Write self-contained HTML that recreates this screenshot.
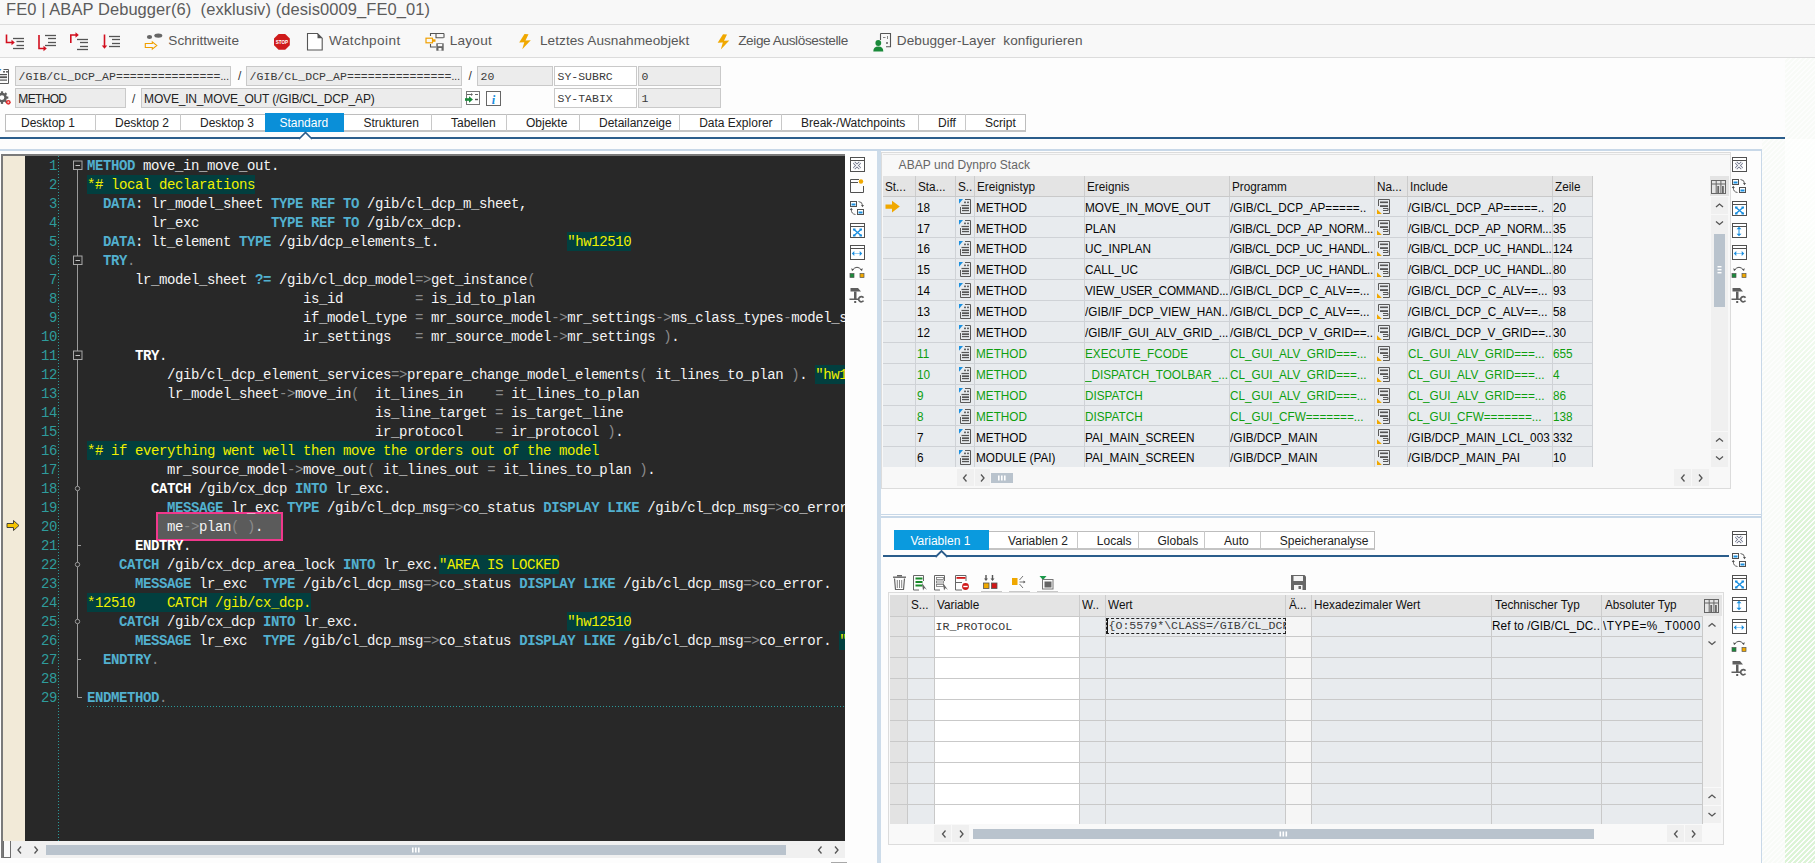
<!DOCTYPE html>
<html><head><meta charset="utf-8"><title>ABAP Debugger</title>
<style>
html,body{margin:0;padding:0;}
body{width:1815px;height:863px;position:relative;overflow:hidden;background:#fdfdfd;font-family:"Liberation Sans", sans-serif;}
.t{position:absolute;white-space:pre;}
.r{position:absolute;}
svg.r{overflow:visible;}
</style></head><body>
<svg class="r" style="left:1762px;top:58px" width="53" height="805" shape-rendering="crispEdges"><defs><pattern id="pf" x="0" y="0" width="5" height="5" patternUnits="userSpaceOnUse"><rect x="0" y="0" width="1" height="1" fill="#f8fbf7"/><rect x="1" y="0" width="1" height="1" fill="#f8fbf7"/><rect x="2" y="0" width="1" height="1" fill="#f8fbf7"/><rect x="0" y="1" width="1" height="1" fill="#f8fbf7"/><rect x="1" y="1" width="1" height="1" fill="#f8fbf7"/><rect x="4" y="1" width="1" height="1" fill="#f8fbf7"/><rect x="0" y="2" width="1" height="1" fill="#f8fbf7"/><rect x="3" y="2" width="1" height="1" fill="#f8fbf7"/><rect x="4" y="2" width="1" height="1" fill="#f8fbf7"/><rect x="2" y="3" width="1" height="1" fill="#f8fbf7"/><rect x="3" y="3" width="1" height="1" fill="#f8fbf7"/><rect x="4" y="3" width="1" height="1" fill="#f8fbf7"/><rect x="1" y="4" width="1" height="1" fill="#f8fbf7"/><rect x="2" y="4" width="1" height="1" fill="#f8fbf7"/><rect x="3" y="4" width="1" height="1" fill="#f8fbf7"/></pattern><pattern id="pg" x="0" y="0" width="5" height="5" patternUnits="userSpaceOnUse"><rect x="0" y="0" width="1" height="1" fill="#dcf4d6"/><rect x="1" y="0" width="1" height="1" fill="#dcf4d6"/><rect x="2" y="0" width="1" height="1" fill="#dcf4d6"/><rect x="0" y="1" width="1" height="1" fill="#dcf4d6"/><rect x="1" y="1" width="1" height="1" fill="#dcf4d6"/><rect x="4" y="1" width="1" height="1" fill="#dcf4d6"/><rect x="0" y="2" width="1" height="1" fill="#dcf4d6"/><rect x="3" y="2" width="1" height="1" fill="#dcf4d6"/><rect x="4" y="2" width="1" height="1" fill="#dcf4d6"/><rect x="2" y="3" width="1" height="1" fill="#dcf4d6"/><rect x="3" y="3" width="1" height="1" fill="#dcf4d6"/><rect x="4" y="3" width="1" height="1" fill="#dcf4d6"/><rect x="1" y="4" width="1" height="1" fill="#dcf4d6"/><rect x="2" y="4" width="1" height="1" fill="#dcf4d6"/><rect x="3" y="4" width="1" height="1" fill="#dcf4d6"/></pattern><linearGradient id="gm" x1="0" y1="0" x2="0" y2="1"><stop offset="0" stop-color="#fff" stop-opacity="0.93"/><stop offset="0.12" stop-color="#fff" stop-opacity="0.9"/><stop offset="0.55" stop-color="#fff" stop-opacity="0"/><stop offset="1" stop-color="#fff" stop-opacity="0"/></linearGradient></defs><rect x="23" y="0" width="30" height="81" fill="url(#pf)"/><rect x="0" y="81" width="23" height="724" fill="url(#pf)"/><rect x="23" y="81" width="30" height="724" fill="url(#pg)"/><rect x="23" y="81" width="30" height="724" fill="url(#gm)"/></svg>
<div class="r" style="left:0px;top:0px;width:1815px;height:24px;background:#f8f8f8;"></div>
<div class="r" style="left:0px;top:24px;width:1815px;height:1px;background:#dcdcdc;"></div>
<div class="t" style="left:6.00px;top:-0.72px;font-size:16.50px;line-height:20px;color:#5c5c5c;font-family:'Liberation Sans', sans-serif;letter-spacing:0.071px;">FE0 | ABAP Debugger(6)  (exklusiv) (desis0009_FE0_01)</div>
<div class="r" style="left:0px;top:25px;width:1815px;height:32px;background:#f8f8f8;"></div>
<div class="r" style="left:0px;top:57px;width:1815px;height:1px;background:#dcdcdc;"></div>
<svg class="r" style="left:0px;top:25px" width="1000" height="32" viewBox="0 25 1000 32"><path d="M6.5 34.5 V42.5 H12" fill="none" stroke="#d20f1e" stroke-width="1.6"/><path d="M11.5 39.8 L14.8 42.5 L11.5 45.2Z" fill="#d20f1e"/><line x1="13" y1="38.5" x2="24" y2="38.5" stroke="#555555" stroke-width="1.3"/><line x1="16.5" y1="41.5" x2="24" y2="41.5" stroke="#555555" stroke-width="1.3"/><line x1="16.5" y1="45.5" x2="24" y2="45.5" stroke="#555555" stroke-width="1.3"/><line x1="13" y1="48.5" x2="24" y2="48.5" stroke="#555555" stroke-width="1.3"/><path d="M39 35 V48.5 H44" fill="none" stroke="#d20f1e" stroke-width="1.6"/><path d="M43.5 45.8 L46.8 48.5 L43.5 51.2Z" fill="#d20f1e"/><line x1="45" y1="35.5" x2="56" y2="35.5" stroke="#555555" stroke-width="1.3"/><line x1="48" y1="38.5" x2="56" y2="38.5" stroke="#555555" stroke-width="1.3"/><line x1="48" y1="42.5" x2="56" y2="42.5" stroke="#555555" stroke-width="1.3"/><line x1="45" y1="45.5" x2="56" y2="45.5" stroke="#555555" stroke-width="1.3"/><path d="M70.8 43 V35 H76" fill="none" stroke="#d20f1e" stroke-width="1.6"/><path d="M75.5 32.3 L78.8 35 L75.5 37.7Z" fill="#d20f1e"/><line x1="77" y1="39.5" x2="88" y2="39.5" stroke="#555555" stroke-width="1.3"/><line x1="80" y1="42.5" x2="88" y2="42.5" stroke="#555555" stroke-width="1.3"/><line x1="80" y1="46.5" x2="88" y2="46.5" stroke="#555555" stroke-width="1.3"/><line x1="77" y1="49.5" x2="88" y2="49.5" stroke="#555555" stroke-width="1.3"/><path d="M104.5 34.5 V46" fill="none" stroke="#d20f1e" stroke-width="1.6"/><path d="M101.8 45.5 L104.5 48.8 L107.2 45.5Z" fill="#d20f1e"/><line x1="109" y1="36.5" x2="120" y2="36.5" stroke="#555555" stroke-width="1.3"/><line x1="112" y1="39.5" x2="120" y2="39.5" stroke="#555555" stroke-width="1.3"/><line x1="112" y1="43.5" x2="120" y2="43.5" stroke="#555555" stroke-width="1.3"/><line x1="109" y1="46.5" x2="120" y2="46.5" stroke="#555555" stroke-width="1.3"/><ellipse cx="149.5" cy="37" rx="2.6" ry="1.9" fill="#666"/><ellipse cx="158.3" cy="35.6" rx="4" ry="2.2" fill="#666"/><path d="M145.3 43.5 H152.3 V41.8 L156.8 45.5 L152.3 49.2 V47.5 H145.3Z" fill="none" stroke="#f0a000" stroke-width="1.1"/><polygon points="278.6,34 285.2,34 289.8,38.6 289.8,45.2 285.2,49.8 278.6,49.8 274,45.2 274,38.6" fill="#cf1b1b"/><text x="281.9" y="44" font-size="4.6" font-weight="bold" fill="#fff" text-anchor="middle" font-family="Liberation Sans">STOP</text><path d="M307.5 33.5 H317.5 L322.2 38.2 V50 H307.5Z" fill="#fff" stroke="#555" stroke-width="1.1"/><path d="M317.5 33.5 V38.2 H322.2Z" fill="#555"/><rect x="426" y="38.2" width="6.5" height="4.6" fill="none" stroke="#f0a000" stroke-width="1.2"/><rect x="432.5" y="39.3" width="3" height="2.5" fill="#f0a000"/><path d="M430.5 36 V33.5 H444 M436 33.5 V37.8 H443.5 M444 33.5 V37.8" fill="none" stroke="#555" stroke-width="1.1"/><path d="M430.5 44 V47 H436" fill="none" stroke="#555" stroke-width="1.1"/><rect x="436.3" y="43.3" width="7.4" height="7.4" fill="#666"/><rect x="437.8" y="44" width="4.4" height="2.2" fill="#f7f7f7"/><rect x="438.5" y="48" width="3" height="2.7" fill="#f7f7f7"/><path d="M524.5 34 L519.2 42.6 L524.3 42.2 L522.3 49.3 L530.8 40.2 L525.5 40.6 L528.5 34.2 Z" fill="#f0a800"/><path d="M723.0 34.2 L717.7 42.800000000000004 L722.8 42.400000000000006 L720.8 49.5 L729.3 40.400000000000006 L724.0 40.800000000000004 L727.0 34.400000000000006 Z" fill="#f0a800"/><path d="M880.5 33.5 H890.5 V46.8 H886" fill="none" stroke="#555" stroke-width="1.1"/><path d="M880.5 33.5 V40" fill="none" stroke="#555" stroke-width="1.1"/><path d="M883 37.5 H885.5 M887.5 36 V39 M887 42 L888 43 L887 44 L886 43Z" stroke="#666" stroke-width="0.8" fill="none"/><circle cx="878.3" cy="43" r="2.9" fill="#1a8a3a"/><path d="M873.3 51.5 Q873.3 46.5 878.3 46.5 Q883.3 46.5 883.3 51.5Z" fill="#1a8a3a"/></svg>
<div class="t" style="left:168.30px;top:32.89px;font-size:13.60px;line-height:16px;color:#575757;font-family:'Liberation Sans', sans-serif;letter-spacing:0.036px;">Schrittweite</div>
<div class="t" style="left:329.00px;top:32.89px;font-size:13.60px;line-height:16px;color:#575757;font-family:'Liberation Sans', sans-serif;letter-spacing:0.418px;">Watchpoint</div>
<div class="t" style="left:449.70px;top:32.89px;font-size:13.60px;line-height:16px;color:#575757;font-family:'Liberation Sans', sans-serif;letter-spacing:0.245px;">Layout</div>
<div class="t" style="left:540.00px;top:32.89px;font-size:13.60px;line-height:16px;color:#575757;font-family:'Liberation Sans', sans-serif;letter-spacing:0.052px;">Letztes Ausnahmeobjekt</div>
<div class="t" style="left:738.20px;top:32.89px;font-size:13.60px;line-height:16px;color:#575757;font-family:'Liberation Sans', sans-serif;letter-spacing:-0.391px;">Zeige Auslösestelle</div>
<div class="t" style="left:896.80px;top:32.89px;font-size:13.60px;line-height:16px;color:#575757;font-family:'Liberation Sans', sans-serif;letter-spacing:0.047px;">Debugger-Layer  konfigurieren</div>
<div class="r" style="left:15px;top:66px;width:216px;height:20px;background:#ececec;border:1px solid #c9c9c9;box-sizing:border-box;"></div>
<div class="r" style="left:246px;top:66px;width:216px;height:20px;background:#ececec;border:1px solid #c9c9c9;box-sizing:border-box;"></div>
<div class="r" style="left:477px;top:66px;width:76px;height:20px;background:#ececec;border:1px solid #c9c9c9;box-sizing:border-box;"></div>
<div class="r" style="left:554px;top:66px;width:83px;height:20px;background:#ffffff;border:1px solid #c9c9c9;box-sizing:border-box;"></div>
<div class="r" style="left:638px;top:66px;width:83px;height:20px;background:#ececec;border:1px solid #c9c9c9;box-sizing:border-box;"></div>
<div class="t" style="left:18.50px;top:69.94px;font-size:11.50px;line-height:14px;color:#3a3a3a;font-family:'Liberation Mono', monospace;letter-spacing:0.059px;">/GIB/CL_DCP_AP===============</div>
<div class="t" style="left:220.50px;top:70.53px;font-size:10.00px;line-height:12px;color:#222;font-family:'Liberation Sans', sans-serif;letter-spacing:0.052px;">...</div>
<div class="t" style="left:238.00px;top:69.34px;font-size:12.00px;line-height:14px;color:#333;font-family:'Liberation Sans', sans-serif;">/</div>
<div class="t" style="left:249.50px;top:69.94px;font-size:11.50px;line-height:14px;color:#3a3a3a;font-family:'Liberation Mono', monospace;letter-spacing:0.059px;">/GIB/CL_DCP_AP===============</div>
<div class="t" style="left:451.50px;top:70.53px;font-size:10.00px;line-height:12px;color:#222;font-family:'Liberation Sans', sans-serif;letter-spacing:0.052px;">...</div>
<div class="t" style="left:468.50px;top:69.34px;font-size:12.00px;line-height:14px;color:#333;font-family:'Liberation Sans', sans-serif;">/</div>
<div class="t" style="left:480.50px;top:69.94px;font-size:11.50px;line-height:14px;color:#3a3a3a;font-family:'Liberation Mono', monospace;">20</div>
<div class="t" style="left:557.50px;top:69.94px;font-size:11.50px;line-height:14px;color:#3a3a3a;font-family:'Liberation Mono', monospace;">SY-SUBRC</div>
<div class="t" style="left:641.50px;top:69.94px;font-size:11.50px;line-height:14px;color:#3a3a3a;font-family:'Liberation Mono', monospace;">0</div>
<div class="r" style="left:15px;top:88px;width:111px;height:20px;background:#ececec;border:1px solid #c9c9c9;box-sizing:border-box;"></div>
<div class="r" style="left:141px;top:88px;width:321px;height:20px;background:#ececec;border:1px solid #c9c9c9;box-sizing:border-box;"></div>
<div class="r" style="left:554px;top:88px;width:83px;height:20px;background:#ffffff;border:1px solid #c9c9c9;box-sizing:border-box;"></div>
<div class="r" style="left:638px;top:88px;width:83px;height:20px;background:#ececec;border:1px solid #c9c9c9;box-sizing:border-box;"></div>
<div class="t" style="left:18.30px;top:91.54px;font-size:12.00px;line-height:14px;color:#222;font-family:'Liberation Sans', sans-serif;letter-spacing:-0.667px;">METHOD</div>
<div class="t" style="left:132.00px;top:91.54px;font-size:12.00px;line-height:14px;color:#333;font-family:'Liberation Sans', sans-serif;">/</div>
<div class="t" style="left:144.10px;top:91.54px;font-size:12.00px;line-height:14px;color:#222;font-family:'Liberation Sans', sans-serif;letter-spacing:-0.183px;">MOVE_IN_MOVE_OUT (/GIB/CL_DCP_AP)</div>
<div class="t" style="left:557.50px;top:91.94px;font-size:11.50px;line-height:14px;color:#3a3a3a;font-family:'Liberation Mono', monospace;">SY-TABIX</div>
<div class="t" style="left:641.50px;top:91.94px;font-size:11.50px;line-height:14px;color:#3a3a3a;font-family:'Liberation Mono', monospace;">1</div>
<svg class="r" style="left:0px;top:60px" width="520" height="52" viewBox="0 60 520 52"><path d="M3.5 69.5 H8.5 V83.5 H-1" fill="none" stroke="#5a5a5a" stroke-width="1"/><rect x="3" y="71" width="2" height="1.6" fill="#666"/><rect x="6" y="71" width="2" height="1.6" fill="#666"/><rect x="0" y="74" width="7" height="1.2" fill="#555"/><rect x="0" y="76.3" width="7" height="1.8" fill="#555"/><rect x="0" y="79.5" width="7" height="1.2" fill="#555"/><path d="M0 69 H1.5 L0 71Z" fill="#1a90e0"/><circle cx="2" cy="97.6" r="3.6" fill="none" stroke="#5e5e5e" stroke-width="2.6"/><rect x="6.10" y="96.50" width="2.2" height="2.2" fill="#5e5e5e" transform="rotate(0 7.20 97.60)"/><rect x="4.58" y="100.18" width="2.2" height="2.2" fill="#5e5e5e" transform="rotate(45 5.68 101.28)"/><rect x="0.90" y="101.70" width="2.2" height="2.2" fill="#5e5e5e" transform="rotate(90 2.00 102.80)"/><rect x="-2.78" y="100.18" width="2.2" height="2.2" fill="#5e5e5e" transform="rotate(135 -1.68 101.28)"/><rect x="-4.30" y="96.50" width="2.2" height="2.2" fill="#5e5e5e" transform="rotate(180 -3.20 97.60)"/><rect x="-2.78" y="92.82" width="2.2" height="2.2" fill="#5e5e5e" transform="rotate(225 -1.68 93.92)"/><rect x="0.90" y="91.30" width="2.2" height="2.2" fill="#5e5e5e" transform="rotate(270 2.00 92.40)"/><rect x="4.58" y="92.82" width="2.2" height="2.2" fill="#5e5e5e" transform="rotate(315 5.68 93.92)"/><circle cx="8.3" cy="102.3" r="2.4" fill="#e02828"/><circle cx="8.3" cy="102.3" r="1" fill="#f8c0c0"/><rect x="466.5" y="91.5" width="13" height="13" fill="#fff" stroke="#777" stroke-width="1"/><path d="M467 94.5 H472 M475 94.5 H478" stroke="#666" stroke-width="1"/><path d="M471 93 L473 94.5 L471 96Z" fill="#666"/><path d="M465 99.5 H469.5" stroke="#1a8a3a" stroke-width="2.6"/><path d="M469 96.3 L473 99.5 L469 102.7Z" fill="#1a8a3a"/><path d="M475 99.5 H478" stroke="#555" stroke-width="1.4"/><rect x="486.5" y="91.5" width="14" height="14" fill="#fff" stroke="#666" stroke-width="1"/><text x="493.5" y="103.5" font-size="12.5" font-style="italic" font-weight="bold" fill="#1a90e0" text-anchor="middle" font-family="Liberation Serif">i</text></svg>
<div class="r" style="left:5px;top:114px;width:1021px;height:18px;background:#fff;border:1px solid #bdbdbd;border-bottom:2px solid #c4c4c4;box-sizing:border-box;"></div>
<div class="r" style="left:95px;top:114px;width:1px;height:17px;background:#c8c8c8;"></div>
<div class="t" style="left:21.00px;top:115.84px;font-size:12.00px;line-height:14px;color:#222222;font-family:'Liberation Sans', sans-serif;">Desktop 1</div>
<div class="r" style="left:180px;top:114px;width:1px;height:17px;background:#c8c8c8;"></div>
<div class="t" style="left:115.00px;top:115.84px;font-size:12.00px;line-height:14px;color:#222222;font-family:'Liberation Sans', sans-serif;">Desktop 2</div>
<div class="r" style="left:265px;top:114px;width:1px;height:17px;background:#c8c8c8;"></div>
<div class="t" style="left:200.00px;top:115.84px;font-size:12.00px;line-height:14px;color:#222222;font-family:'Liberation Sans', sans-serif;">Desktop 3</div>
<div class="r" style="left:265px;top:113px;width:79px;height:19px;background:#0a8fd8;"></div>
<div class="t" style="left:279.40px;top:115.84px;font-size:12.00px;line-height:14px;color:#ffffff;font-family:'Liberation Sans', sans-serif;">Standard</div>
<div class="r" style="left:431px;top:114px;width:1px;height:17px;background:#c8c8c8;"></div>
<div class="t" style="left:363.50px;top:115.84px;font-size:12.00px;line-height:14px;color:#222222;font-family:'Liberation Sans', sans-serif;">Strukturen</div>
<div class="r" style="left:506px;top:114px;width:1px;height:17px;background:#c8c8c8;"></div>
<div class="t" style="left:451.00px;top:115.84px;font-size:12.00px;line-height:14px;color:#222222;font-family:'Liberation Sans', sans-serif;">Tabellen</div>
<div class="r" style="left:579px;top:114px;width:1px;height:17px;background:#c8c8c8;"></div>
<div class="t" style="left:526.00px;top:115.84px;font-size:12.00px;line-height:14px;color:#222222;font-family:'Liberation Sans', sans-serif;">Objekte</div>
<div class="r" style="left:679px;top:114px;width:1px;height:17px;background:#c8c8c8;"></div>
<div class="t" style="left:599.00px;top:115.84px;font-size:12.00px;line-height:14px;color:#222222;font-family:'Liberation Sans', sans-serif;">Detailanzeige</div>
<div class="r" style="left:781px;top:114px;width:1px;height:17px;background:#c8c8c8;"></div>
<div class="t" style="left:699.20px;top:115.84px;font-size:12.00px;line-height:14px;color:#222222;font-family:'Liberation Sans', sans-serif;">Data Explorer</div>
<div class="r" style="left:918px;top:114px;width:1px;height:17px;background:#c8c8c8;"></div>
<div class="t" style="left:801.00px;top:115.84px;font-size:12.00px;line-height:14px;color:#222222;font-family:'Liberation Sans', sans-serif;">Break-/Watchpoints</div>
<div class="r" style="left:965px;top:114px;width:1px;height:17px;background:#c8c8c8;"></div>
<div class="t" style="left:938.10px;top:115.84px;font-size:12.00px;line-height:14px;color:#222222;font-family:'Liberation Sans', sans-serif;">Diff</div>
<div class="t" style="left:985.10px;top:115.84px;font-size:12.00px;line-height:14px;color:#222222;font-family:'Liberation Sans', sans-serif;">Script</div>
<div class="r" style="left:0px;top:137px;width:1785px;height:2px;background:#2b5d8b;"></div>
<svg class="r" style="left:295px;top:128px" width="20" height="12" viewBox="295 128 20 12"><path d="M299 139 L305.5 132.5 L312 139" fill="#fff" stroke="#2b5d8b" stroke-width="1.6"/></svg>
<div class="r" style="left:0px;top:149px;width:1762px;height:2px;background:#c8d8e8;"></div>
<div class="r" style="left:1px;top:154px;width:844px;height:704px;background:#7a7a7a;"></div>
<div class="r" style="left:3px;top:156px;width:22px;height:685px;background:#f2ead8;"></div>
<div class="r" style="left:25px;top:156px;width:820px;height:685px;background:#282828;"></div>
<div class="r" style="left:3px;top:841px;width:842px;height:17px;background:#f0f0f0;"></div>
<div class="r" style="left:831px;top:862px;width:16px;height:1px;background:#a8a8a8;"></div>
<div class="r" style="left:2.5px;top:841px;width:8px;height:17px;background:#fafafa;border:1.5px solid #6e6e6e;border-top:none;box-sizing:border-box;"></div>
<div class="r" style="left:46px;top:845px;width:740px;height:10px;background:#b9c3cd;"></div>
<svg class="r" style="left:0px;top:840px" width="845" height="20" viewBox="0 840 845 20"><path d="M21 846.5 L18 850 L21 853.5" fill="none" stroke="#555" stroke-width="1.3"/><path d="M34.5 846.5 L37.5 850 L34.5 853.5" fill="none" stroke="#555" stroke-width="1.3"/><path d="M821.5 846.5 L818.5 850 L821.5 853.5" fill="none" stroke="#555" stroke-width="1.3"/><path d="M835 846.5 L838 850 L835 853.5" fill="none" stroke="#555" stroke-width="1.3"/><rect x="412" y="847.5" width="1.6" height="5" fill="#fff"/><rect x="415" y="847.5" width="1.6" height="5" fill="#fff"/><rect x="418" y="847.5" width="1.6" height="5" fill="#fff"/></svg>
<div class="r" style="left:58px;top:156px;width:1px;height:685px;background:repeating-linear-gradient(180deg,#2a9a9a 0px,#2a9a9a 1px,transparent 1px,transparent 3px);"></div>
<div class="r" style="left:156px;top:512px;width:127px;height:29px;background:#5b5b5b;border:2px solid #f0388c;box-sizing:border-box;"></div>
<div class="r" style="left:87px;top:175px;width:168px;height:19px;background:#023f3f;"></div>
<div class="r" style="left:567px;top:232px;width:64px;height:19px;background:#023f3f;"></div>
<div class="r" style="left:815px;top:365px;width:30px;height:19px;background:#023f3f;"></div>
<div class="r" style="left:87px;top:441px;width:512px;height:19px;background:#023f3f;"></div>
<div class="r" style="left:439px;top:555px;width:120px;height:19px;background:#023f3f;"></div>
<div class="r" style="left:87px;top:593px;width:224px;height:19px;background:#023f3f;"></div>
<div class="r" style="left:567px;top:612px;width:64px;height:19px;background:#023f3f;"></div>
<div class="r" style="left:839px;top:631px;width:6px;height:19px;background:#023f3f;"></div>
<div class="r" style="left:87px;top:156px;width:758px;height:685px;overflow:hidden;font-family:'Liberation Mono',monospace;font-size:14.00px;letter-spacing:-0.400px;"><div style="position:absolute;left:0;top:1px;height:19px;line-height:19px;white-space:pre;"><b style="color:#52b0cf">METHOD</b><span style="color:#f4f4f4"> move_in_move_out.</span></div><div style="position:absolute;left:0;top:20px;height:19px;line-height:19px;white-space:pre;"><span style="color:#f0f000">*# local declarations</span></div><div style="position:absolute;left:0;top:39px;height:19px;line-height:19px;white-space:pre;">  <b style="color:#52b0cf">DATA</b><span style="color:#f4f4f4">: lr_model_sheet </span><b style="color:#52b0cf">TYPE REF TO</b><span style="color:#f4f4f4"> /gib/cl_dcp_m_sheet,</span></div><div style="position:absolute;left:0;top:58px;height:19px;line-height:19px;white-space:pre;">        <span style="color:#f4f4f4">lr_exc</span>         <b style="color:#52b0cf">TYPE REF TO</b><span style="color:#f4f4f4"> /gib/cx_dcp.</span></div><div style="position:absolute;left:0;top:77px;height:19px;line-height:19px;white-space:pre;">  <b style="color:#52b0cf">DATA</b><span style="color:#f4f4f4">: lt_element </span><b style="color:#52b0cf">TYPE</b><span style="color:#f4f4f4"> /gib/dcp_elements_t.</span>                <span style="color:#f0f000">"hw12510</span></div><div style="position:absolute;left:0;top:96px;height:19px;line-height:19px;white-space:pre;">  <b style="color:#52b0cf">TRY</b><span style="color:#8a8a8a">.</span></div><div style="position:absolute;left:0;top:115px;height:19px;line-height:19px;white-space:pre;">      <span style="color:#f4f4f4">lr_model_sheet </span><b style="color:#52b0cf">?=</b><span style="color:#f4f4f4"> /gib/cl_dcp_model</span><span style="color:#8a8a8a">=&gt;</span><span style="color:#f4f4f4">get_instance</span><span style="color:#8a8a8a">(</span></div><div style="position:absolute;left:0;top:134px;height:19px;line-height:19px;white-space:pre;">                           <span style="color:#f4f4f4">is_id</span>         <span style="color:#8a8a8a">=</span><span style="color:#f4f4f4"> is_id_to_plan</span></div><div style="position:absolute;left:0;top:153px;height:19px;line-height:19px;white-space:pre;">                           <span style="color:#f4f4f4">if_model_type </span><span style="color:#8a8a8a">=</span><span style="color:#f4f4f4"> mr_source_model</span><span style="color:#8a8a8a">-&gt;</span><span style="color:#f4f4f4">mr_settings</span><span style="color:#8a8a8a">-&gt;</span><span style="color:#f4f4f4">ms_class_types</span><span style="color:#8a8a8a">-</span><span style="color:#f4f4f4">model_s</span></div><div style="position:absolute;left:0;top:172px;height:19px;line-height:19px;white-space:pre;">                           <span style="color:#f4f4f4">ir_settings</span>   <span style="color:#8a8a8a">=</span><span style="color:#f4f4f4"> mr_source_model</span><span style="color:#8a8a8a">-&gt;</span><span style="color:#f4f4f4">mr_settings </span><span style="color:#8a8a8a">)</span><span style="color:#f4f4f4">.</span></div><div style="position:absolute;left:0;top:191px;height:19px;line-height:19px;white-space:pre;">      <b style="color:#ffffff">TRY</b><span style="color:#f4f4f4">.</span></div><div style="position:absolute;left:0;top:210px;height:19px;line-height:19px;white-space:pre;">          <span style="color:#f4f4f4">/gib/cl_dcp_element_services</span><span style="color:#8a8a8a">=&gt;</span><span style="color:#f4f4f4">prepare_change_model_elements</span><span style="color:#8a8a8a">(</span><span style="color:#f4f4f4"> it_lines_to_plan </span><span style="color:#8a8a8a">)</span><span style="color:#f4f4f4">.</span> <span style="color:#f0f000">"hw1</span></div><div style="position:absolute;left:0;top:229px;height:19px;line-height:19px;white-space:pre;">          <span style="color:#f4f4f4">lr_model_sheet</span><span style="color:#8a8a8a">-&gt;</span><span style="color:#f4f4f4">move_in</span><span style="color:#8a8a8a">(</span>  <span style="color:#f4f4f4">it_lines_in</span>    <span style="color:#8a8a8a">=</span><span style="color:#f4f4f4"> it_lines_to_plan</span></div><div style="position:absolute;left:0;top:248px;height:19px;line-height:19px;white-space:pre;">                                    <span style="color:#f4f4f4">is_line_target </span><span style="color:#8a8a8a">=</span><span style="color:#f4f4f4"> is_target_line</span></div><div style="position:absolute;left:0;top:267px;height:19px;line-height:19px;white-space:pre;">                                    <span style="color:#f4f4f4">ir_protocol</span>    <span style="color:#8a8a8a">=</span><span style="color:#f4f4f4"> ir_protocol </span><span style="color:#8a8a8a">)</span><span style="color:#f4f4f4">.</span></div><div style="position:absolute;left:0;top:286px;height:19px;line-height:19px;white-space:pre;"><span style="color:#f0f000">*# if everything went well then move the orders out of the model</span></div><div style="position:absolute;left:0;top:305px;height:19px;line-height:19px;white-space:pre;">          <span style="color:#f4f4f4">mr_source_model</span><span style="color:#8a8a8a">-&gt;</span><span style="color:#f4f4f4">move_out</span><span style="color:#8a8a8a">(</span><span style="color:#f4f4f4"> it_lines_out </span><span style="color:#8a8a8a">=</span><span style="color:#f4f4f4"> it_lines_to_plan </span><span style="color:#8a8a8a">)</span><span style="color:#f4f4f4">.</span></div><div style="position:absolute;left:0;top:324px;height:19px;line-height:19px;white-space:pre;">        <b style="color:#ffffff">CATCH</b><span style="color:#f4f4f4"> /gib/cx_dcp </span><b style="color:#52b0cf">INTO</b><span style="color:#f4f4f4"> lr_exc.</span></div><div style="position:absolute;left:0;top:343px;height:19px;line-height:19px;white-space:pre;">          <b style="color:#52b0cf">MESSAGE</b><span style="color:#f4f4f4"> lr_exc </span><b style="color:#52b0cf">TYPE</b><span style="color:#f4f4f4"> /gib/cl_dcp_msg</span><span style="color:#8a8a8a">=&gt;</span><span style="color:#f4f4f4">co_status </span><b style="color:#52b0cf">DISPLAY LIKE</b><span style="color:#f4f4f4"> /gib/cl_dcp_msg</span><span style="color:#8a8a8a">=&gt;</span><span style="color:#f4f4f4">co_error</span></div><div style="position:absolute;left:0;top:362px;height:19px;line-height:19px;white-space:pre;">          <span style="color:#f4f4f4">me</span><span style="color:#8a8a8a">-&gt;</span><span style="color:#f4f4f4">plan</span><span style="color:#8a8a8a">( )</span><span style="color:#f4f4f4">.</span></div><div style="position:absolute;left:0;top:381px;height:19px;line-height:19px;white-space:pre;">      <b style="color:#ffffff">ENDTRY</b><span style="color:#f4f4f4">.</span></div><div style="position:absolute;left:0;top:400px;height:19px;line-height:19px;white-space:pre;">    <b style="color:#52b0cf">CATCH</b><span style="color:#f4f4f4"> /gib/cx_dcp_area_lock </span><b style="color:#52b0cf">INTO</b><span style="color:#f4f4f4"> lr_exc.</span><span style="color:#f0f000">"AREA IS LOCKED</span></div><div style="position:absolute;left:0;top:419px;height:19px;line-height:19px;white-space:pre;">      <b style="color:#52b0cf">MESSAGE</b><span style="color:#f4f4f4"> lr_exc  </span><b style="color:#52b0cf">TYPE</b><span style="color:#f4f4f4"> /gib/cl_dcp_msg</span><span style="color:#8a8a8a">=&gt;</span><span style="color:#f4f4f4">co_status </span><b style="color:#52b0cf">DISPLAY LIKE</b><span style="color:#f4f4f4"> /gib/cl_dcp_msg</span><span style="color:#8a8a8a">=&gt;</span><span style="color:#f4f4f4">co_error.</span></div><div style="position:absolute;left:0;top:438px;height:19px;line-height:19px;white-space:pre;"><span style="color:#f0f000">*12510    CATCH /gib/cx_dcp.</span></div><div style="position:absolute;left:0;top:457px;height:19px;line-height:19px;white-space:pre;">    <b style="color:#52b0cf">CATCH</b><span style="color:#f4f4f4"> /gib/cx_dcp </span><b style="color:#52b0cf">INTO</b><span style="color:#f4f4f4"> lr_exc.</span>                          <span style="color:#f0f000">"hw12510</span></div><div style="position:absolute;left:0;top:476px;height:19px;line-height:19px;white-space:pre;">      <b style="color:#52b0cf">MESSAGE</b><span style="color:#f4f4f4"> lr_exc  </span><b style="color:#52b0cf">TYPE</b><span style="color:#f4f4f4"> /gib/cl_dcp_msg</span><span style="color:#8a8a8a">=&gt;</span><span style="color:#f4f4f4">co_status </span><b style="color:#52b0cf">DISPLAY LIKE</b><span style="color:#f4f4f4"> /gib/cl_dcp_msg</span><span style="color:#8a8a8a">=&gt;</span><span style="color:#f4f4f4">co_error. </span><span style="color:#f0f000">"</span></div><div style="position:absolute;left:0;top:495px;height:19px;line-height:19px;white-space:pre;">  <b style="color:#52b0cf">ENDTRY</b><span style="color:#8a8a8a">.</span></div><div style="position:absolute;left:0;top:514px;height:19px;line-height:19px;white-space:pre;"></div><div style="position:absolute;left:0;top:533px;height:19px;line-height:19px;white-space:pre;"><b style="color:#52b0cf">ENDMETHOD</b><span style="color:#8a8a8a">.</span></div></div>
<div class="t" style="left:49.00px;top:157.97px;font-size:14.00px;line-height:17px;color:#2e9c9c;font-family:'Liberation Mono', monospace;letter-spacing:-0.400px;">1</div>
<div class="t" style="left:49.00px;top:176.97px;font-size:14.00px;line-height:17px;color:#2e9c9c;font-family:'Liberation Mono', monospace;letter-spacing:-0.400px;">2</div>
<div class="t" style="left:49.00px;top:195.97px;font-size:14.00px;line-height:17px;color:#2e9c9c;font-family:'Liberation Mono', monospace;letter-spacing:-0.400px;">3</div>
<div class="t" style="left:49.00px;top:214.97px;font-size:14.00px;line-height:17px;color:#2e9c9c;font-family:'Liberation Mono', monospace;letter-spacing:-0.400px;">4</div>
<div class="t" style="left:49.00px;top:233.97px;font-size:14.00px;line-height:17px;color:#2e9c9c;font-family:'Liberation Mono', monospace;letter-spacing:-0.400px;">5</div>
<div class="t" style="left:49.00px;top:252.97px;font-size:14.00px;line-height:17px;color:#2e9c9c;font-family:'Liberation Mono', monospace;letter-spacing:-0.400px;">6</div>
<div class="t" style="left:49.00px;top:271.97px;font-size:14.00px;line-height:17px;color:#2e9c9c;font-family:'Liberation Mono', monospace;letter-spacing:-0.400px;">7</div>
<div class="t" style="left:49.00px;top:290.97px;font-size:14.00px;line-height:17px;color:#2e9c9c;font-family:'Liberation Mono', monospace;letter-spacing:-0.400px;">8</div>
<div class="t" style="left:49.00px;top:309.97px;font-size:14.00px;line-height:17px;color:#2e9c9c;font-family:'Liberation Mono', monospace;letter-spacing:-0.400px;">9</div>
<div class="t" style="left:41.00px;top:328.97px;font-size:14.00px;line-height:17px;color:#2e9c9c;font-family:'Liberation Mono', monospace;letter-spacing:-0.400px;">10</div>
<div class="t" style="left:41.00px;top:347.97px;font-size:14.00px;line-height:17px;color:#2e9c9c;font-family:'Liberation Mono', monospace;letter-spacing:-0.400px;">11</div>
<div class="t" style="left:41.00px;top:366.97px;font-size:14.00px;line-height:17px;color:#2e9c9c;font-family:'Liberation Mono', monospace;letter-spacing:-0.400px;">12</div>
<div class="t" style="left:41.00px;top:385.97px;font-size:14.00px;line-height:17px;color:#2e9c9c;font-family:'Liberation Mono', monospace;letter-spacing:-0.400px;">13</div>
<div class="t" style="left:41.00px;top:404.97px;font-size:14.00px;line-height:17px;color:#2e9c9c;font-family:'Liberation Mono', monospace;letter-spacing:-0.400px;">14</div>
<div class="t" style="left:41.00px;top:423.97px;font-size:14.00px;line-height:17px;color:#2e9c9c;font-family:'Liberation Mono', monospace;letter-spacing:-0.400px;">15</div>
<div class="t" style="left:41.00px;top:442.97px;font-size:14.00px;line-height:17px;color:#2e9c9c;font-family:'Liberation Mono', monospace;letter-spacing:-0.400px;">16</div>
<div class="t" style="left:41.00px;top:461.97px;font-size:14.00px;line-height:17px;color:#2e9c9c;font-family:'Liberation Mono', monospace;letter-spacing:-0.400px;">17</div>
<div class="t" style="left:41.00px;top:480.97px;font-size:14.00px;line-height:17px;color:#2e9c9c;font-family:'Liberation Mono', monospace;letter-spacing:-0.400px;">18</div>
<div class="t" style="left:41.00px;top:499.97px;font-size:14.00px;line-height:17px;color:#2e9c9c;font-family:'Liberation Mono', monospace;letter-spacing:-0.400px;">19</div>
<div class="t" style="left:41.00px;top:518.97px;font-size:14.00px;line-height:17px;color:#2e9c9c;font-family:'Liberation Mono', monospace;letter-spacing:-0.400px;">20</div>
<div class="t" style="left:41.00px;top:537.97px;font-size:14.00px;line-height:17px;color:#2e9c9c;font-family:'Liberation Mono', monospace;letter-spacing:-0.400px;">21</div>
<div class="t" style="left:41.00px;top:556.97px;font-size:14.00px;line-height:17px;color:#2e9c9c;font-family:'Liberation Mono', monospace;letter-spacing:-0.400px;">22</div>
<div class="t" style="left:41.00px;top:575.97px;font-size:14.00px;line-height:17px;color:#2e9c9c;font-family:'Liberation Mono', monospace;letter-spacing:-0.400px;">23</div>
<div class="t" style="left:41.00px;top:594.97px;font-size:14.00px;line-height:17px;color:#2e9c9c;font-family:'Liberation Mono', monospace;letter-spacing:-0.400px;">24</div>
<div class="t" style="left:41.00px;top:613.97px;font-size:14.00px;line-height:17px;color:#2e9c9c;font-family:'Liberation Mono', monospace;letter-spacing:-0.400px;">25</div>
<div class="t" style="left:41.00px;top:632.97px;font-size:14.00px;line-height:17px;color:#2e9c9c;font-family:'Liberation Mono', monospace;letter-spacing:-0.400px;">26</div>
<div class="t" style="left:41.00px;top:651.97px;font-size:14.00px;line-height:17px;color:#2e9c9c;font-family:'Liberation Mono', monospace;letter-spacing:-0.400px;">27</div>
<div class="t" style="left:41.00px;top:670.97px;font-size:14.00px;line-height:17px;color:#2e9c9c;font-family:'Liberation Mono', monospace;letter-spacing:-0.400px;">28</div>
<div class="t" style="left:41.00px;top:689.97px;font-size:14.00px;line-height:17px;color:#2e9c9c;font-family:'Liberation Mono', monospace;letter-spacing:-0.400px;">29</div>
<div class="r" style="left:87px;top:706px;width:758px;height:1px;background:repeating-linear-gradient(90deg,#2a9a9a 0px,#2a9a9a 1px,transparent 1px,transparent 3px);"></div>
<svg class="r" style="left:60px;top:156px" width="30" height="560" viewBox="60 156 30 560"><path d="M77.5 170 V697.5 H82" fill="none" stroke="#9a9a9a" stroke-width="1"/><rect x="73.5" y="161.0" width="8.5" height="8.5" fill="#282828" stroke="#a8a8a8" stroke-width="1"/><line x1="75.5" y1="165.5" x2="80" y2="165.5" stroke="#c0c0c0" stroke-width="1"/><rect x="73.5" y="256.0" width="8.5" height="8.5" fill="#282828" stroke="#a8a8a8" stroke-width="1"/><line x1="75.5" y1="260.5" x2="80" y2="260.5" stroke="#c0c0c0" stroke-width="1"/><rect x="73.5" y="351.0" width="8.5" height="8.5" fill="#282828" stroke="#a8a8a8" stroke-width="1"/><line x1="75.5" y1="355.5" x2="80" y2="355.5" stroke="#c0c0c0" stroke-width="1"/><circle cx="77.5" cy="488.5" r="2.2" fill="#282828" stroke="#9a9a9a" stroke-width="1"/><circle cx="77.5" cy="564.5" r="2.2" fill="#282828" stroke="#9a9a9a" stroke-width="1"/><circle cx="77.5" cy="621.5" r="2.2" fill="#282828" stroke="#9a9a9a" stroke-width="1"/><line x1="77.5" y1="545.5" x2="81" y2="545.5" stroke="#9a9a9a" stroke-width="1"/><line x1="77.5" y1="659.5" x2="81" y2="659.5" stroke="#9a9a9a" stroke-width="1"/></svg>
<svg class="r" style="left:3px;top:516px" width="22" height="20" viewBox="3 516 22 20"><path d="M7 523.5 H13.5 V520.5 L19 525.5 L13.5 530.5 V527.5 H7Z" fill="#f5c400" stroke="#333" stroke-width="0.9"/></svg>
<svg class="r" style="left:846px;top:150px" width="26" height="160" viewBox="846 150 26 160"><rect x="850.5" y="157.5" width="14" height="14" fill="#fff" stroke="#505050" stroke-width="1"/><line x1="850.5" y1="160.5" x2="864.5" y2="160.5" stroke="#505050" stroke-width="1"/><path d="M854 162.5 L860 168.5 M860 162.5 L854 168.5" stroke="#6a7088" stroke-width="2.9"/><path d="M854 162.5 L860 168.5 M860 162.5 L854 168.5" stroke="#fff" stroke-width="1.1"/><path d="M850.5 179.5 H859 M850.5 179.5 V192.5 H863.5 V186 M850.5 182.5 H858" fill="none" stroke="#505050" stroke-width="1"/><circle cx="861" cy="181.5" r="2.2" fill="#f0a800"/><rect x="850.5" y="201.5" width="6" height="5" fill="#fff" stroke="#505050" stroke-width="1"/><rect x="851.5" y="203.5" width="4" height="2" fill="#1a8fe0"/><rect x="857.5" y="209.5" width="6" height="5" fill="#fff" stroke="#505050" stroke-width="1"/><rect x="858.5" y="211.5" width="4" height="2" fill="#1a8fe0"/><path d="M858.5 201.5 Q862.5 201.8 862.5 205.5" fill="none" stroke="#505050" stroke-width="0.9"/><path d="M855.5 214.5 Q851.2 214 851.3 209.5" fill="none" stroke="#505050" stroke-width="0.9"/><path d="M861 205 L864 205 L862.5 207.2 Z" fill="#505050"/><path d="M849.8 210 L852.8 210 L851.3 207.8 Z" fill="#505050"/><rect x="850.5" y="223.5" width="14" height="14" fill="#fff" stroke="#505050" stroke-width="1"/><line x1="850.5" y1="226.5" x2="864.5" y2="226.5" stroke="#505050" stroke-width="1"/><path d="M854 229.5 L861 235.5 M861 229.5 L854 235.5" stroke="#1a8fe0" stroke-width="1.4"/><path d="M853 228.5 h2.5 v2 h-2.5Z M859.5 228.5 h2.5 v2 h-2.5Z M853 234.5 h2.5 v2 h-2.5Z M859.5 234.5 h2.5 v2 h-2.5Z" fill="#1a8fe0"/><rect x="850.5" y="245.5" width="14" height="14" fill="#fff" stroke="#505050" stroke-width="1"/><line x1="850.5" y1="248.5" x2="864.5" y2="248.5" stroke="#505050" stroke-width="1"/><path d="M853 253.5 H861" stroke="#8cc8f0" stroke-width="0.9"/><path d="M851.8 253.5 l2.5 -2.5 v5Z M862.2 253.5 l-2.5 -2.5 v5Z" fill="#1a8fe0"/><path d="M852.5 270 Q857 264.5 861.5 270" fill="none" stroke="#505050" stroke-width="1"/><path d="M852 271 l-0.8 -2.8 l2.8 1.2Z M862 271 l0.8 -2.8 l-2.8 1.2Z" fill="#505050"/><rect x="850" y="273.5" width="4" height="4" fill="#1a8a3a" stroke="#555" stroke-width="0.7"/><rect x="860" y="273.5" width="4" height="4" fill="#f0a800" stroke="#555" stroke-width="0.7"/><path d="M850.5 288 H858 L861 291.5 H850.5 Z" fill="#5e5e5e"/><rect x="854" y="291.5" width="2.5" height="7.5" fill="#5e5e5e"/><rect x="849.5" y="298.5" width="8.5" height="1.5" fill="#5e5e5e"/><rect x="854.2" y="301" width="2" height="2" fill="#5e5e5e"/><path d="M863.5 297.8 A2.6 2.6 0 1 0 863.5 300.6" fill="none" stroke="#5e5e5e" stroke-width="1.7"/></svg>
<div class="r" style="left:877px;top:151px;width:4px;height:712px;background:#cddcea;"></div>
<div class="r" style="left:1761px;top:149px;width:1px;height:714px;background:#c8d8e8;"></div>
<div class="r" style="left:881px;top:514px;width:881px;height:1px;background:#c8d8e8;"></div>
<div class="r" style="left:881px;top:516px;width:881px;height:2px;background:#c8d8e8;"></div>
<div class="r" style="left:881px;top:152px;width:850px;height:337px;background:#f8f8f8;border:1px solid #dcdcdc;box-sizing:border-box;"></div>
<div class="r" style="left:883px;top:154px;width:847px;height:1px;background:#e2e2e2;"></div>
<div class="t" style="left:898.60px;top:157.74px;font-size:12.00px;line-height:14px;color:#666666;font-family:'Liberation Sans', sans-serif;letter-spacing:0.044px;">ABAP und Dynpro Stack</div>
<svg class="r" style="left:1728px;top:150px" width="26" height="160" viewBox="1728 150 26 160"><rect x="1732.5" y="157.5" width="14" height="14" fill="#fff" stroke="#505050" stroke-width="1"/><line x1="1732.5" y1="160.5" x2="1746.5" y2="160.5" stroke="#505050" stroke-width="1"/><path d="M1736 162.5 L1742 168.5 M1742 162.5 L1736 168.5" stroke="#6a7088" stroke-width="2.9"/><path d="M1736 162.5 L1742 168.5 M1742 162.5 L1736 168.5" stroke="#fff" stroke-width="1.1"/><rect x="1732.5" y="179.5" width="6" height="5" fill="#fff" stroke="#505050" stroke-width="1"/><rect x="1733.5" y="181.5" width="4" height="2" fill="#1a8fe0"/><rect x="1739.5" y="187.5" width="6" height="5" fill="#fff" stroke="#505050" stroke-width="1"/><rect x="1740.5" y="189.5" width="4" height="2" fill="#1a8fe0"/><path d="M1740.5 179.5 Q1744.5 179.8 1744.5 183.5" fill="none" stroke="#505050" stroke-width="0.9"/><path d="M1737.5 192.5 Q1733.2 192 1733.3 187.5" fill="none" stroke="#505050" stroke-width="0.9"/><path d="M1743 183 L1746 183 L1744.5 185.2 Z" fill="#505050"/><path d="M1731.8 188 L1734.8 188 L1733.3 185.8 Z" fill="#505050"/><rect x="1732.5" y="201.5" width="14" height="14" fill="#fff" stroke="#505050" stroke-width="1"/><line x1="1732.5" y1="204.5" x2="1746.5" y2="204.5" stroke="#505050" stroke-width="1"/><path d="M1736 207.5 L1743 213.5 M1743 207.5 L1736 213.5" stroke="#1a8fe0" stroke-width="1.4"/><path d="M1735 206.5 h2.5 v2 h-2.5Z M1741.5 206.5 h2.5 v2 h-2.5Z M1735 212.5 h2.5 v2 h-2.5Z M1741.5 212.5 h2.5 v2 h-2.5Z" fill="#1a8fe0"/><rect x="1732.5" y="223.5" width="14" height="14" fill="#fff" stroke="#505050" stroke-width="1"/><line x1="1732.5" y1="226.5" x2="1746.5" y2="226.5" stroke="#505050" stroke-width="1"/><path d="M1739 228 V235" stroke="#1a8fe0" stroke-width="1"/><path d="M1739 226.8 l-2.5 2.5 h5Z M1739 236.2 l-2.5 -2.5 h5Z" fill="#1a8fe0"/><rect x="1732.5" y="245.5" width="14" height="14" fill="#fff" stroke="#505050" stroke-width="1"/><line x1="1732.5" y1="248.5" x2="1746.5" y2="248.5" stroke="#505050" stroke-width="1"/><path d="M1735 253.5 H1743" stroke="#8cc8f0" stroke-width="0.9"/><path d="M1733.8 253.5 l2.5 -2.5 v5Z M1744.2 253.5 l-2.5 -2.5 v5Z" fill="#1a8fe0"/><path d="M1734.5 270 Q1739 264.5 1743.5 270" fill="none" stroke="#505050" stroke-width="1"/><path d="M1734 271 l-0.8 -2.8 l2.8 1.2Z M1744 271 l0.8 -2.8 l-2.8 1.2Z" fill="#505050"/><rect x="1732" y="273.5" width="4" height="4" fill="#1a8a3a" stroke="#555" stroke-width="0.7"/><rect x="1742" y="273.5" width="4" height="4" fill="#f0a800" stroke="#555" stroke-width="0.7"/><path d="M1732.5 288 H1740 L1743 291.5 H1732.5 Z" fill="#5e5e5e"/><rect x="1736" y="291.5" width="2.5" height="7.5" fill="#5e5e5e"/><rect x="1731.5" y="298.5" width="8.5" height="1.5" fill="#5e5e5e"/><rect x="1736.2" y="301" width="2" height="2" fill="#5e5e5e"/><path d="M1745.5 297.8 A2.6 2.6 0 1 0 1745.5 300.6" fill="none" stroke="#5e5e5e" stroke-width="1.7"/></svg>
<div class="r" style="left:883px;top:176px;width:709.5px;height:20px;background:#e4e4e4;"></div>
<div class="r" style="left:883px;top:196px;width:709.5px;height:1px;background:#c9c9c9;"></div>
<div class="t" style="left:885.30px;top:180.37px;font-size:12.50px;line-height:15px;color:#111;font-family:'Liberation Sans', sans-serif;transform:scaleX(0.9400);transform-origin:0 0;">St...</div>
<div class="t" style="left:918.30px;top:180.37px;font-size:12.50px;line-height:15px;color:#111;font-family:'Liberation Sans', sans-serif;transform:scaleX(0.9400);transform-origin:0 0;">Sta...</div>
<div class="t" style="left:958.20px;top:180.37px;font-size:12.50px;line-height:15px;color:#111;font-family:'Liberation Sans', sans-serif;transform:scaleX(0.9400);transform-origin:0 0;">S..</div>
<div class="t" style="left:977.20px;top:180.37px;font-size:12.50px;line-height:15px;color:#111;font-family:'Liberation Sans', sans-serif;transform:scaleX(0.9400);transform-origin:0 0;">Ereignistyp</div>
<div class="t" style="left:1086.80px;top:180.37px;font-size:12.50px;line-height:15px;color:#111;font-family:'Liberation Sans', sans-serif;transform:scaleX(0.9400);transform-origin:0 0;">Ereignis</div>
<div class="t" style="left:1232.00px;top:180.37px;font-size:12.50px;line-height:15px;color:#111;font-family:'Liberation Sans', sans-serif;transform:scaleX(0.9400);transform-origin:0 0;">Programm</div>
<div class="t" style="left:1377.00px;top:180.37px;font-size:12.50px;line-height:15px;color:#111;font-family:'Liberation Sans', sans-serif;transform:scaleX(0.9400);transform-origin:0 0;">Na...</div>
<div class="t" style="left:1410.00px;top:180.37px;font-size:12.50px;line-height:15px;color:#111;font-family:'Liberation Sans', sans-serif;transform:scaleX(0.9400);transform-origin:0 0;">Include</div>
<div class="t" style="left:1555.00px;top:180.37px;font-size:12.50px;line-height:15px;color:#111;font-family:'Liberation Sans', sans-serif;transform:scaleX(0.9400);transform-origin:0 0;">Zeile</div>
<div class="r" style="left:915px;top:176px;width:1px;height:20px;background:#cccccc;"></div>
<div class="r" style="left:955px;top:176px;width:1px;height:20px;background:#cccccc;"></div>
<div class="r" style="left:974px;top:176px;width:1px;height:20px;background:#cccccc;"></div>
<div class="r" style="left:1084px;top:176px;width:1px;height:20px;background:#cccccc;"></div>
<div class="r" style="left:1229px;top:176px;width:1px;height:20px;background:#cccccc;"></div>
<div class="r" style="left:1374px;top:176px;width:1px;height:20px;background:#cccccc;"></div>
<div class="r" style="left:1407px;top:176px;width:1px;height:20px;background:#cccccc;"></div>
<div class="r" style="left:1552px;top:176px;width:1px;height:20px;background:#cccccc;"></div>
<div class="r" style="left:1592px;top:176px;width:1px;height:20px;background:#cccccc;"></div>
<div class="r" style="left:883px;top:197px;width:709.5px;height:270px;background:#e8ebee;"></div>
<div class="t" style="left:916.50px;top:200.67px;font-size:12.50px;line-height:15px;color:#050505;font-family:'Liberation Sans', sans-serif;transform:scaleX(0.9400);transform-origin:0 0;">18</div>
<div class="t" style="left:975.60px;top:200.67px;font-size:12.50px;line-height:15px;color:#050505;font-family:'Liberation Sans', sans-serif;transform:scaleX(0.9400);transform-origin:0 0;">METHOD</div>
<div class="t" style="left:1085.20px;top:200.67px;font-size:12.50px;line-height:15px;color:#050505;font-family:'Liberation Sans', sans-serif;letter-spacing:0.000px;transform:scaleX(0.9400);transform-origin:0 0;">MOVE_IN_MOVE_OUT</div>
<div class="t" style="left:1230.40px;top:200.67px;font-size:12.50px;line-height:15px;color:#050505;font-family:'Liberation Sans', sans-serif;letter-spacing:0.000px;transform:scaleX(0.9400);transform-origin:0 0;">/GIB/CL_DCP_AP=====..</div>
<div class="t" style="left:1408.00px;top:200.67px;font-size:12.50px;line-height:15px;color:#050505;font-family:'Liberation Sans', sans-serif;letter-spacing:0.000px;transform:scaleX(0.9400);transform-origin:0 0;">/GIB/CL_DCP_AP=====..</div>
<div class="t" style="left:1553.30px;top:200.67px;font-size:12.50px;line-height:15px;color:#050505;font-family:'Liberation Sans', sans-serif;transform:scaleX(0.9400);transform-origin:0 0;">20</div>
<div class="r" style="left:883px;top:216px;width:709.5px;height:1px;background:#cfd2d6;"></div>
<div class="t" style="left:916.50px;top:221.57px;font-size:12.50px;line-height:15px;color:#050505;font-family:'Liberation Sans', sans-serif;transform:scaleX(0.9400);transform-origin:0 0;">17</div>
<div class="t" style="left:975.60px;top:221.57px;font-size:12.50px;line-height:15px;color:#050505;font-family:'Liberation Sans', sans-serif;transform:scaleX(0.9400);transform-origin:0 0;">METHOD</div>
<div class="t" style="left:1085.20px;top:221.57px;font-size:12.50px;line-height:15px;color:#050505;font-family:'Liberation Sans', sans-serif;letter-spacing:0.000px;transform:scaleX(0.9400);transform-origin:0 0;">PLAN</div>
<div class="t" style="left:1230.40px;top:221.57px;font-size:12.50px;line-height:15px;color:#050505;font-family:'Liberation Sans', sans-serif;letter-spacing:-0.217px;transform:scaleX(0.9400);transform-origin:0 0;">/GIB/CL_DCP_AP_NORM...</div>
<div class="t" style="left:1408.00px;top:221.57px;font-size:12.50px;line-height:15px;color:#050505;font-family:'Liberation Sans', sans-serif;letter-spacing:-0.197px;transform:scaleX(0.9400);transform-origin:0 0;">/GIB/CL_DCP_AP_NORM...</div>
<div class="t" style="left:1553.30px;top:221.57px;font-size:12.50px;line-height:15px;color:#050505;font-family:'Liberation Sans', sans-serif;transform:scaleX(0.9400);transform-origin:0 0;">35</div>
<div class="r" style="left:883px;top:237px;width:709.5px;height:1px;background:#cfd2d6;"></div>
<div class="t" style="left:916.50px;top:242.47px;font-size:12.50px;line-height:15px;color:#050505;font-family:'Liberation Sans', sans-serif;transform:scaleX(0.9400);transform-origin:0 0;">16</div>
<div class="t" style="left:975.60px;top:242.47px;font-size:12.50px;line-height:15px;color:#050505;font-family:'Liberation Sans', sans-serif;transform:scaleX(0.9400);transform-origin:0 0;">METHOD</div>
<div class="t" style="left:1085.20px;top:242.47px;font-size:12.50px;line-height:15px;color:#050505;font-family:'Liberation Sans', sans-serif;letter-spacing:0.000px;transform:scaleX(0.9400);transform-origin:0 0;">UC_INPLAN</div>
<div class="t" style="left:1230.40px;top:242.47px;font-size:12.50px;line-height:15px;color:#050505;font-family:'Liberation Sans', sans-serif;letter-spacing:-0.313px;transform:scaleX(0.9400);transform-origin:0 0;">/GIB/CL_DCP_UC_HANDL..</div>
<div class="t" style="left:1408.00px;top:242.47px;font-size:12.50px;line-height:15px;color:#050505;font-family:'Liberation Sans', sans-serif;letter-spacing:-0.293px;transform:scaleX(0.9400);transform-origin:0 0;">/GIB/CL_DCP_UC_HANDL..</div>
<div class="t" style="left:1553.30px;top:242.47px;font-size:12.50px;line-height:15px;color:#050505;font-family:'Liberation Sans', sans-serif;transform:scaleX(0.9400);transform-origin:0 0;">124</div>
<div class="r" style="left:883px;top:258px;width:709.5px;height:1px;background:#cfd2d6;"></div>
<div class="t" style="left:916.50px;top:263.37px;font-size:12.50px;line-height:15px;color:#050505;font-family:'Liberation Sans', sans-serif;transform:scaleX(0.9400);transform-origin:0 0;">15</div>
<div class="t" style="left:975.60px;top:263.37px;font-size:12.50px;line-height:15px;color:#050505;font-family:'Liberation Sans', sans-serif;transform:scaleX(0.9400);transform-origin:0 0;">METHOD</div>
<div class="t" style="left:1085.20px;top:263.37px;font-size:12.50px;line-height:15px;color:#050505;font-family:'Liberation Sans', sans-serif;letter-spacing:0.000px;transform:scaleX(0.9400);transform-origin:0 0;">CALL_UC</div>
<div class="t" style="left:1230.40px;top:263.37px;font-size:12.50px;line-height:15px;color:#050505;font-family:'Liberation Sans', sans-serif;letter-spacing:-0.313px;transform:scaleX(0.9400);transform-origin:0 0;">/GIB/CL_DCP_UC_HANDL..</div>
<div class="t" style="left:1408.00px;top:263.37px;font-size:12.50px;line-height:15px;color:#050505;font-family:'Liberation Sans', sans-serif;letter-spacing:-0.293px;transform:scaleX(0.9400);transform-origin:0 0;">/GIB/CL_DCP_UC_HANDL..</div>
<div class="t" style="left:1553.30px;top:263.37px;font-size:12.50px;line-height:15px;color:#050505;font-family:'Liberation Sans', sans-serif;transform:scaleX(0.9400);transform-origin:0 0;">80</div>
<div class="r" style="left:883px;top:279px;width:709.5px;height:1px;background:#cfd2d6;"></div>
<div class="t" style="left:916.50px;top:284.27px;font-size:12.50px;line-height:15px;color:#050505;font-family:'Liberation Sans', sans-serif;transform:scaleX(0.9400);transform-origin:0 0;">14</div>
<div class="t" style="left:975.60px;top:284.27px;font-size:12.50px;line-height:15px;color:#050505;font-family:'Liberation Sans', sans-serif;transform:scaleX(0.9400);transform-origin:0 0;">METHOD</div>
<div class="t" style="left:1085.20px;top:284.27px;font-size:12.50px;line-height:15px;color:#050505;font-family:'Liberation Sans', sans-serif;letter-spacing:-0.227px;transform:scaleX(0.9400);transform-origin:0 0;">VIEW_USER_COMMAND...</div>
<div class="t" style="left:1230.40px;top:284.27px;font-size:12.50px;line-height:15px;color:#050505;font-family:'Liberation Sans', sans-serif;letter-spacing:0.000px;transform:scaleX(0.9400);transform-origin:0 0;">/GIB/CL_DCP_C_ALV==...</div>
<div class="t" style="left:1408.00px;top:284.27px;font-size:12.50px;line-height:15px;color:#050505;font-family:'Liberation Sans', sans-serif;letter-spacing:0.000px;transform:scaleX(0.9400);transform-origin:0 0;">/GIB/CL_DCP_C_ALV==...</div>
<div class="t" style="left:1553.30px;top:284.27px;font-size:12.50px;line-height:15px;color:#050505;font-family:'Liberation Sans', sans-serif;transform:scaleX(0.9400);transform-origin:0 0;">93</div>
<div class="r" style="left:883px;top:300px;width:709.5px;height:1px;background:#cfd2d6;"></div>
<div class="t" style="left:916.50px;top:305.17px;font-size:12.50px;line-height:15px;color:#050505;font-family:'Liberation Sans', sans-serif;transform:scaleX(0.9400);transform-origin:0 0;">13</div>
<div class="t" style="left:975.60px;top:305.17px;font-size:12.50px;line-height:15px;color:#050505;font-family:'Liberation Sans', sans-serif;transform:scaleX(0.9400);transform-origin:0 0;">METHOD</div>
<div class="t" style="left:1085.20px;top:305.17px;font-size:12.50px;line-height:15px;color:#050505;font-family:'Liberation Sans', sans-serif;letter-spacing:0.000px;transform:scaleX(0.9400);transform-origin:0 0;">/GIB/IF_DCP_VIEW_HAN..</div>
<div class="t" style="left:1230.40px;top:305.17px;font-size:12.50px;line-height:15px;color:#050505;font-family:'Liberation Sans', sans-serif;letter-spacing:0.000px;transform:scaleX(0.9400);transform-origin:0 0;">/GIB/CL_DCP_C_ALV==...</div>
<div class="t" style="left:1408.00px;top:305.17px;font-size:12.50px;line-height:15px;color:#050505;font-family:'Liberation Sans', sans-serif;letter-spacing:0.000px;transform:scaleX(0.9400);transform-origin:0 0;">/GIB/CL_DCP_C_ALV==...</div>
<div class="t" style="left:1553.30px;top:305.17px;font-size:12.50px;line-height:15px;color:#050505;font-family:'Liberation Sans', sans-serif;transform:scaleX(0.9400);transform-origin:0 0;">58</div>
<div class="r" style="left:883px;top:321px;width:709.5px;height:1px;background:#cfd2d6;"></div>
<div class="t" style="left:916.50px;top:326.07px;font-size:12.50px;line-height:15px;color:#050505;font-family:'Liberation Sans', sans-serif;transform:scaleX(0.9400);transform-origin:0 0;">12</div>
<div class="t" style="left:975.60px;top:326.07px;font-size:12.50px;line-height:15px;color:#050505;font-family:'Liberation Sans', sans-serif;transform:scaleX(0.9400);transform-origin:0 0;">METHOD</div>
<div class="t" style="left:1085.20px;top:326.07px;font-size:12.50px;line-height:15px;color:#050505;font-family:'Liberation Sans', sans-serif;letter-spacing:-0.064px;transform:scaleX(0.9400);transform-origin:0 0;">/GIB/IF_GUI_ALV_GRID_...</div>
<div class="t" style="left:1230.40px;top:326.07px;font-size:12.50px;line-height:15px;color:#050505;font-family:'Liberation Sans', sans-serif;letter-spacing:-0.028px;transform:scaleX(0.9400);transform-origin:0 0;">/GIB/CL_DCP_V_GRID==..</div>
<div class="t" style="left:1408.00px;top:326.07px;font-size:12.50px;line-height:15px;color:#050505;font-family:'Liberation Sans', sans-serif;letter-spacing:-0.008px;transform:scaleX(0.9400);transform-origin:0 0;">/GIB/CL_DCP_V_GRID==..</div>
<div class="t" style="left:1553.30px;top:326.07px;font-size:12.50px;line-height:15px;color:#050505;font-family:'Liberation Sans', sans-serif;transform:scaleX(0.9400);transform-origin:0 0;">30</div>
<div class="r" style="left:883px;top:342px;width:709.5px;height:1px;background:#cfd2d6;"></div>
<div class="t" style="left:916.50px;top:346.97px;font-size:12.50px;line-height:15px;color:#0e9e0e;font-family:'Liberation Sans', sans-serif;transform:scaleX(0.9400);transform-origin:0 0;">11</div>
<div class="t" style="left:975.60px;top:346.97px;font-size:12.50px;line-height:15px;color:#0e9e0e;font-family:'Liberation Sans', sans-serif;transform:scaleX(0.9400);transform-origin:0 0;">METHOD</div>
<div class="t" style="left:1085.20px;top:346.97px;font-size:12.50px;line-height:15px;color:#0e9e0e;font-family:'Liberation Sans', sans-serif;letter-spacing:0.000px;transform:scaleX(0.9400);transform-origin:0 0;">EXECUTE_FCODE</div>
<div class="t" style="left:1230.40px;top:346.97px;font-size:12.50px;line-height:15px;color:#0e9e0e;font-family:'Liberation Sans', sans-serif;letter-spacing:0.000px;transform:scaleX(0.9400);transform-origin:0 0;">CL_GUI_ALV_GRID===...</div>
<div class="t" style="left:1408.00px;top:346.97px;font-size:12.50px;line-height:15px;color:#0e9e0e;font-family:'Liberation Sans', sans-serif;letter-spacing:0.000px;transform:scaleX(0.9400);transform-origin:0 0;">CL_GUI_ALV_GRID===...</div>
<div class="t" style="left:1553.30px;top:346.97px;font-size:12.50px;line-height:15px;color:#0e9e0e;font-family:'Liberation Sans', sans-serif;transform:scaleX(0.9400);transform-origin:0 0;">655</div>
<div class="r" style="left:883px;top:363px;width:709.5px;height:1px;background:#cfd2d6;"></div>
<div class="t" style="left:916.50px;top:367.87px;font-size:12.50px;line-height:15px;color:#0e9e0e;font-family:'Liberation Sans', sans-serif;transform:scaleX(0.9400);transform-origin:0 0;">10</div>
<div class="t" style="left:975.60px;top:367.87px;font-size:12.50px;line-height:15px;color:#0e9e0e;font-family:'Liberation Sans', sans-serif;transform:scaleX(0.9400);transform-origin:0 0;">METHOD</div>
<div class="t" style="left:1085.20px;top:367.87px;font-size:12.50px;line-height:15px;color:#0e9e0e;font-family:'Liberation Sans', sans-serif;letter-spacing:0.000px;transform:scaleX(0.9400);transform-origin:0 0;">_DISPATCH_TOOLBAR_...</div>
<div class="t" style="left:1230.40px;top:367.87px;font-size:12.50px;line-height:15px;color:#0e9e0e;font-family:'Liberation Sans', sans-serif;letter-spacing:0.000px;transform:scaleX(0.9400);transform-origin:0 0;">CL_GUI_ALV_GRID===...</div>
<div class="t" style="left:1408.00px;top:367.87px;font-size:12.50px;line-height:15px;color:#0e9e0e;font-family:'Liberation Sans', sans-serif;letter-spacing:0.000px;transform:scaleX(0.9400);transform-origin:0 0;">CL_GUI_ALV_GRID===...</div>
<div class="t" style="left:1553.30px;top:367.87px;font-size:12.50px;line-height:15px;color:#0e9e0e;font-family:'Liberation Sans', sans-serif;transform:scaleX(0.9400);transform-origin:0 0;">4</div>
<div class="r" style="left:883px;top:384px;width:709.5px;height:1px;background:#cfd2d6;"></div>
<div class="t" style="left:916.50px;top:388.77px;font-size:12.50px;line-height:15px;color:#0e9e0e;font-family:'Liberation Sans', sans-serif;transform:scaleX(0.9400);transform-origin:0 0;">9</div>
<div class="t" style="left:975.60px;top:388.77px;font-size:12.50px;line-height:15px;color:#0e9e0e;font-family:'Liberation Sans', sans-serif;transform:scaleX(0.9400);transform-origin:0 0;">METHOD</div>
<div class="t" style="left:1085.20px;top:388.77px;font-size:12.50px;line-height:15px;color:#0e9e0e;font-family:'Liberation Sans', sans-serif;letter-spacing:0.000px;transform:scaleX(0.9400);transform-origin:0 0;">DISPATCH</div>
<div class="t" style="left:1230.40px;top:388.77px;font-size:12.50px;line-height:15px;color:#0e9e0e;font-family:'Liberation Sans', sans-serif;letter-spacing:0.000px;transform:scaleX(0.9400);transform-origin:0 0;">CL_GUI_ALV_GRID===...</div>
<div class="t" style="left:1408.00px;top:388.77px;font-size:12.50px;line-height:15px;color:#0e9e0e;font-family:'Liberation Sans', sans-serif;letter-spacing:0.000px;transform:scaleX(0.9400);transform-origin:0 0;">CL_GUI_ALV_GRID===...</div>
<div class="t" style="left:1553.30px;top:388.77px;font-size:12.50px;line-height:15px;color:#0e9e0e;font-family:'Liberation Sans', sans-serif;transform:scaleX(0.9400);transform-origin:0 0;">86</div>
<div class="r" style="left:883px;top:405px;width:709.5px;height:1px;background:#cfd2d6;"></div>
<div class="t" style="left:916.50px;top:409.67px;font-size:12.50px;line-height:15px;color:#0e9e0e;font-family:'Liberation Sans', sans-serif;transform:scaleX(0.9400);transform-origin:0 0;">8</div>
<div class="t" style="left:975.60px;top:409.67px;font-size:12.50px;line-height:15px;color:#0e9e0e;font-family:'Liberation Sans', sans-serif;transform:scaleX(0.9400);transform-origin:0 0;">METHOD</div>
<div class="t" style="left:1085.20px;top:409.67px;font-size:12.50px;line-height:15px;color:#0e9e0e;font-family:'Liberation Sans', sans-serif;letter-spacing:0.000px;transform:scaleX(0.9400);transform-origin:0 0;">DISPATCH</div>
<div class="t" style="left:1230.40px;top:409.67px;font-size:12.50px;line-height:15px;color:#0e9e0e;font-family:'Liberation Sans', sans-serif;letter-spacing:0.000px;transform:scaleX(0.9400);transform-origin:0 0;">CL_GUI_CFW=======...</div>
<div class="t" style="left:1408.00px;top:409.67px;font-size:12.50px;line-height:15px;color:#0e9e0e;font-family:'Liberation Sans', sans-serif;letter-spacing:0.000px;transform:scaleX(0.9400);transform-origin:0 0;">CL_GUI_CFW=======...</div>
<div class="t" style="left:1553.30px;top:409.67px;font-size:12.50px;line-height:15px;color:#0e9e0e;font-family:'Liberation Sans', sans-serif;transform:scaleX(0.9400);transform-origin:0 0;">138</div>
<div class="r" style="left:883px;top:425px;width:709.5px;height:1px;background:#cfd2d6;"></div>
<div class="t" style="left:916.50px;top:430.57px;font-size:12.50px;line-height:15px;color:#050505;font-family:'Liberation Sans', sans-serif;transform:scaleX(0.9400);transform-origin:0 0;">7</div>
<div class="t" style="left:975.60px;top:430.57px;font-size:12.50px;line-height:15px;color:#050505;font-family:'Liberation Sans', sans-serif;transform:scaleX(0.9400);transform-origin:0 0;">METHOD</div>
<div class="t" style="left:1085.20px;top:430.57px;font-size:12.50px;line-height:15px;color:#050505;font-family:'Liberation Sans', sans-serif;letter-spacing:0.000px;transform:scaleX(0.9400);transform-origin:0 0;">PAI_MAIN_SCREEN</div>
<div class="t" style="left:1230.40px;top:430.57px;font-size:12.50px;line-height:15px;color:#050505;font-family:'Liberation Sans', sans-serif;letter-spacing:0.000px;transform:scaleX(0.9400);transform-origin:0 0;">/GIB/DCP_MAIN</div>
<div class="t" style="left:1408.00px;top:430.57px;font-size:12.50px;line-height:15px;color:#050505;font-family:'Liberation Sans', sans-serif;letter-spacing:0.000px;transform:scaleX(0.9400);transform-origin:0 0;">/GIB/DCP_MAIN_LCL_003</div>
<div class="t" style="left:1553.30px;top:430.57px;font-size:12.50px;line-height:15px;color:#050505;font-family:'Liberation Sans', sans-serif;transform:scaleX(0.9400);transform-origin:0 0;">332</div>
<div class="r" style="left:883px;top:446px;width:709.5px;height:1px;background:#cfd2d6;"></div>
<div class="t" style="left:916.50px;top:451.47px;font-size:12.50px;line-height:15px;color:#050505;font-family:'Liberation Sans', sans-serif;transform:scaleX(0.9400);transform-origin:0 0;">6</div>
<div class="t" style="left:975.60px;top:451.47px;font-size:12.50px;line-height:15px;color:#050505;font-family:'Liberation Sans', sans-serif;transform:scaleX(0.9400);transform-origin:0 0;">MODULE (PAI)</div>
<div class="t" style="left:1085.20px;top:451.47px;font-size:12.50px;line-height:15px;color:#050505;font-family:'Liberation Sans', sans-serif;letter-spacing:0.000px;transform:scaleX(0.9400);transform-origin:0 0;">PAI_MAIN_SCREEN</div>
<div class="t" style="left:1230.40px;top:451.47px;font-size:12.50px;line-height:15px;color:#050505;font-family:'Liberation Sans', sans-serif;letter-spacing:0.000px;transform:scaleX(0.9400);transform-origin:0 0;">/GIB/DCP_MAIN</div>
<div class="t" style="left:1408.00px;top:451.47px;font-size:12.50px;line-height:15px;color:#050505;font-family:'Liberation Sans', sans-serif;letter-spacing:0.000px;transform:scaleX(0.9400);transform-origin:0 0;">/GIB/DCP_MAIN_PAI</div>
<div class="t" style="left:1553.30px;top:451.47px;font-size:12.50px;line-height:15px;color:#050505;font-family:'Liberation Sans', sans-serif;transform:scaleX(0.9400);transform-origin:0 0;">10</div>
<div class="r" style="left:915px;top:197px;width:1px;height:270px;background:#cfd2d6;"></div>
<div class="r" style="left:955px;top:197px;width:1px;height:270px;background:#cfd2d6;"></div>
<div class="r" style="left:974px;top:197px;width:1px;height:270px;background:#cfd2d6;"></div>
<div class="r" style="left:1084px;top:197px;width:1px;height:270px;background:#cfd2d6;"></div>
<div class="r" style="left:1229px;top:197px;width:1px;height:270px;background:#cfd2d6;"></div>
<div class="r" style="left:1374px;top:197px;width:1px;height:270px;background:#cfd2d6;"></div>
<div class="r" style="left:1407px;top:197px;width:1px;height:270px;background:#cfd2d6;"></div>
<div class="r" style="left:1552px;top:197px;width:1px;height:270px;background:#cfd2d6;"></div>
<div class="r" style="left:1592px;top:197px;width:1px;height:270px;background:#cfd2d6;"></div>
<svg class="r" style="left:880px;top:195px" width="700" height="275" viewBox="880 195 700 275"><path d="M959 199 H963 L959 203.8Z" fill="#1a90e0"/><path d="M965 199.5 H970.5 V213.5 H960.5 V207" fill="none" stroke="#5a5a5a" stroke-width="1"/><rect x="964" y="201.6" width="2" height="1.6" fill="#666"/><rect x="967" y="201.6" width="2" height="1.6" fill="#666"/><rect x="961.5" y="204.9" width="7.5" height="1.2" fill="#555"/><rect x="962" y="207.3" width="7" height="1.8" fill="#555"/><rect x="962" y="210" width="7" height="1.2" fill="#555"/><path d="M1378.5 206 V199.5 H1389.5 V213.5 H1383" fill="none" stroke="#5a5a5a" stroke-width="1"/><rect x="1380" y="201.5" width="8" height="1.6" fill="#555"/><rect x="1380" y="205.2" width="8" height="1.8" fill="#555"/><path d="M1383 208.5 H1388 V210.5 H1383" fill="none" stroke="#555" stroke-width="1"/><path d="M1377 209.2 V214 H1381.8Z" fill="#f0a800"/><path d="M959 220 H963 L959 224.8Z" fill="#1a90e0"/><path d="M965 220.5 H970.5 V234.5 H960.5 V228" fill="none" stroke="#5a5a5a" stroke-width="1"/><rect x="964" y="222.6" width="2" height="1.6" fill="#666"/><rect x="967" y="222.6" width="2" height="1.6" fill="#666"/><rect x="961.5" y="225.9" width="7.5" height="1.2" fill="#555"/><rect x="962" y="228.3" width="7" height="1.8" fill="#555"/><rect x="962" y="231" width="7" height="1.2" fill="#555"/><path d="M1378.5 227 V220.5 H1389.5 V234.5 H1383" fill="none" stroke="#5a5a5a" stroke-width="1"/><rect x="1380" y="222.5" width="8" height="1.6" fill="#555"/><rect x="1380" y="226.2" width="8" height="1.8" fill="#555"/><path d="M1383 229.5 H1388 V231.5 H1383" fill="none" stroke="#555" stroke-width="1"/><path d="M1377 230.2 V235 H1381.8Z" fill="#f0a800"/><path d="M959 241 H963 L959 245.8Z" fill="#1a90e0"/><path d="M965 241.5 H970.5 V255.5 H960.5 V249" fill="none" stroke="#5a5a5a" stroke-width="1"/><rect x="964" y="243.6" width="2" height="1.6" fill="#666"/><rect x="967" y="243.6" width="2" height="1.6" fill="#666"/><rect x="961.5" y="246.9" width="7.5" height="1.2" fill="#555"/><rect x="962" y="249.3" width="7" height="1.8" fill="#555"/><rect x="962" y="252" width="7" height="1.2" fill="#555"/><path d="M1378.5 248 V241.5 H1389.5 V255.5 H1383" fill="none" stroke="#5a5a5a" stroke-width="1"/><rect x="1380" y="243.5" width="8" height="1.6" fill="#555"/><rect x="1380" y="247.2" width="8" height="1.8" fill="#555"/><path d="M1383 250.5 H1388 V252.5 H1383" fill="none" stroke="#555" stroke-width="1"/><path d="M1377 251.2 V256 H1381.8Z" fill="#f0a800"/><path d="M959 262 H963 L959 266.8Z" fill="#1a90e0"/><path d="M965 262.5 H970.5 V276.5 H960.5 V270" fill="none" stroke="#5a5a5a" stroke-width="1"/><rect x="964" y="264.6" width="2" height="1.6" fill="#666"/><rect x="967" y="264.6" width="2" height="1.6" fill="#666"/><rect x="961.5" y="267.9" width="7.5" height="1.2" fill="#555"/><rect x="962" y="270.3" width="7" height="1.8" fill="#555"/><rect x="962" y="273" width="7" height="1.2" fill="#555"/><path d="M1378.5 269 V262.5 H1389.5 V276.5 H1383" fill="none" stroke="#5a5a5a" stroke-width="1"/><rect x="1380" y="264.5" width="8" height="1.6" fill="#555"/><rect x="1380" y="268.2" width="8" height="1.8" fill="#555"/><path d="M1383 271.5 H1388 V273.5 H1383" fill="none" stroke="#555" stroke-width="1"/><path d="M1377 272.2 V277 H1381.8Z" fill="#f0a800"/><path d="M959 283 H963 L959 287.8Z" fill="#1a90e0"/><path d="M965 283.5 H970.5 V297.5 H960.5 V291" fill="none" stroke="#5a5a5a" stroke-width="1"/><rect x="964" y="285.6" width="2" height="1.6" fill="#666"/><rect x="967" y="285.6" width="2" height="1.6" fill="#666"/><rect x="961.5" y="288.9" width="7.5" height="1.2" fill="#555"/><rect x="962" y="291.3" width="7" height="1.8" fill="#555"/><rect x="962" y="294" width="7" height="1.2" fill="#555"/><path d="M1378.5 290 V283.5 H1389.5 V297.5 H1383" fill="none" stroke="#5a5a5a" stroke-width="1"/><rect x="1380" y="285.5" width="8" height="1.6" fill="#555"/><rect x="1380" y="289.2" width="8" height="1.8" fill="#555"/><path d="M1383 292.5 H1388 V294.5 H1383" fill="none" stroke="#555" stroke-width="1"/><path d="M1377 293.2 V298 H1381.8Z" fill="#f0a800"/><path d="M959 304 H963 L959 308.8Z" fill="#1a90e0"/><path d="M965 304.5 H970.5 V318.5 H960.5 V312" fill="none" stroke="#5a5a5a" stroke-width="1"/><rect x="964" y="306.6" width="2" height="1.6" fill="#666"/><rect x="967" y="306.6" width="2" height="1.6" fill="#666"/><rect x="961.5" y="309.9" width="7.5" height="1.2" fill="#555"/><rect x="962" y="312.3" width="7" height="1.8" fill="#555"/><rect x="962" y="315" width="7" height="1.2" fill="#555"/><path d="M1378.5 311 V304.5 H1389.5 V318.5 H1383" fill="none" stroke="#5a5a5a" stroke-width="1"/><rect x="1380" y="306.5" width="8" height="1.6" fill="#555"/><rect x="1380" y="310.2" width="8" height="1.8" fill="#555"/><path d="M1383 313.5 H1388 V315.5 H1383" fill="none" stroke="#555" stroke-width="1"/><path d="M1377 314.2 V319 H1381.8Z" fill="#f0a800"/><path d="M959 325 H963 L959 329.8Z" fill="#1a90e0"/><path d="M965 325.5 H970.5 V339.5 H960.5 V333" fill="none" stroke="#5a5a5a" stroke-width="1"/><rect x="964" y="327.6" width="2" height="1.6" fill="#666"/><rect x="967" y="327.6" width="2" height="1.6" fill="#666"/><rect x="961.5" y="330.9" width="7.5" height="1.2" fill="#555"/><rect x="962" y="333.3" width="7" height="1.8" fill="#555"/><rect x="962" y="336" width="7" height="1.2" fill="#555"/><path d="M1378.5 332 V325.5 H1389.5 V339.5 H1383" fill="none" stroke="#5a5a5a" stroke-width="1"/><rect x="1380" y="327.5" width="8" height="1.6" fill="#555"/><rect x="1380" y="331.2" width="8" height="1.8" fill="#555"/><path d="M1383 334.5 H1388 V336.5 H1383" fill="none" stroke="#555" stroke-width="1"/><path d="M1377 335.2 V340 H1381.8Z" fill="#f0a800"/><path d="M959 346 H963 L959 350.8Z" fill="#1a90e0"/><path d="M965 346.5 H970.5 V360.5 H960.5 V354" fill="none" stroke="#5a5a5a" stroke-width="1"/><rect x="964" y="348.6" width="2" height="1.6" fill="#666"/><rect x="967" y="348.6" width="2" height="1.6" fill="#666"/><rect x="961.5" y="351.9" width="7.5" height="1.2" fill="#555"/><rect x="962" y="354.3" width="7" height="1.8" fill="#555"/><rect x="962" y="357" width="7" height="1.2" fill="#555"/><path d="M1378.5 353 V346.5 H1389.5 V360.5 H1383" fill="none" stroke="#5a5a5a" stroke-width="1"/><rect x="1380" y="348.5" width="8" height="1.6" fill="#555"/><rect x="1380" y="352.2" width="8" height="1.8" fill="#555"/><path d="M1383 355.5 H1388 V357.5 H1383" fill="none" stroke="#555" stroke-width="1"/><path d="M1377 356.2 V361 H1381.8Z" fill="#f0a800"/><path d="M959 367 H963 L959 371.8Z" fill="#1a90e0"/><path d="M965 367.5 H970.5 V381.5 H960.5 V375" fill="none" stroke="#5a5a5a" stroke-width="1"/><rect x="964" y="369.6" width="2" height="1.6" fill="#666"/><rect x="967" y="369.6" width="2" height="1.6" fill="#666"/><rect x="961.5" y="372.9" width="7.5" height="1.2" fill="#555"/><rect x="962" y="375.3" width="7" height="1.8" fill="#555"/><rect x="962" y="378" width="7" height="1.2" fill="#555"/><path d="M1378.5 374 V367.5 H1389.5 V381.5 H1383" fill="none" stroke="#5a5a5a" stroke-width="1"/><rect x="1380" y="369.5" width="8" height="1.6" fill="#555"/><rect x="1380" y="373.2" width="8" height="1.8" fill="#555"/><path d="M1383 376.5 H1388 V378.5 H1383" fill="none" stroke="#555" stroke-width="1"/><path d="M1377 377.2 V382 H1381.8Z" fill="#f0a800"/><path d="M959 388 H963 L959 392.8Z" fill="#1a90e0"/><path d="M965 388.5 H970.5 V402.5 H960.5 V396" fill="none" stroke="#5a5a5a" stroke-width="1"/><rect x="964" y="390.6" width="2" height="1.6" fill="#666"/><rect x="967" y="390.6" width="2" height="1.6" fill="#666"/><rect x="961.5" y="393.9" width="7.5" height="1.2" fill="#555"/><rect x="962" y="396.3" width="7" height="1.8" fill="#555"/><rect x="962" y="399" width="7" height="1.2" fill="#555"/><path d="M1378.5 395 V388.5 H1389.5 V402.5 H1383" fill="none" stroke="#5a5a5a" stroke-width="1"/><rect x="1380" y="390.5" width="8" height="1.6" fill="#555"/><rect x="1380" y="394.2" width="8" height="1.8" fill="#555"/><path d="M1383 397.5 H1388 V399.5 H1383" fill="none" stroke="#555" stroke-width="1"/><path d="M1377 398.2 V403 H1381.8Z" fill="#f0a800"/><path d="M959 409 H963 L959 413.8Z" fill="#1a90e0"/><path d="M965 409.5 H970.5 V423.5 H960.5 V417" fill="none" stroke="#5a5a5a" stroke-width="1"/><rect x="964" y="411.6" width="2" height="1.6" fill="#666"/><rect x="967" y="411.6" width="2" height="1.6" fill="#666"/><rect x="961.5" y="414.9" width="7.5" height="1.2" fill="#555"/><rect x="962" y="417.3" width="7" height="1.8" fill="#555"/><rect x="962" y="420" width="7" height="1.2" fill="#555"/><path d="M1378.5 416 V409.5 H1389.5 V423.5 H1383" fill="none" stroke="#5a5a5a" stroke-width="1"/><rect x="1380" y="411.5" width="8" height="1.6" fill="#555"/><rect x="1380" y="415.2" width="8" height="1.8" fill="#555"/><path d="M1383 418.5 H1388 V420.5 H1383" fill="none" stroke="#555" stroke-width="1"/><path d="M1377 419.2 V424 H1381.8Z" fill="#f0a800"/><path d="M959 429 H963 L959 433.8Z" fill="#1a90e0"/><path d="M965 429.5 H970.5 V443.5 H960.5 V437" fill="none" stroke="#5a5a5a" stroke-width="1"/><rect x="964" y="431.6" width="2" height="1.6" fill="#666"/><rect x="967" y="431.6" width="2" height="1.6" fill="#666"/><rect x="961.5" y="434.9" width="7.5" height="1.2" fill="#555"/><rect x="962" y="437.3" width="7" height="1.8" fill="#555"/><rect x="962" y="440" width="7" height="1.2" fill="#555"/><path d="M1378.5 436 V429.5 H1389.5 V443.5 H1383" fill="none" stroke="#5a5a5a" stroke-width="1"/><rect x="1380" y="431.5" width="8" height="1.6" fill="#555"/><rect x="1380" y="435.2" width="8" height="1.8" fill="#555"/><path d="M1383 438.5 H1388 V440.5 H1383" fill="none" stroke="#555" stroke-width="1"/><path d="M1377 439.2 V444 H1381.8Z" fill="#f0a800"/><path d="M959 450 H963 L959 454.8Z" fill="#1a90e0"/><path d="M965 450.5 H970.5 V464.5 H960.5 V458" fill="none" stroke="#5a5a5a" stroke-width="1"/><rect x="964" y="452.6" width="2" height="1.6" fill="#666"/><rect x="967" y="452.6" width="2" height="1.6" fill="#666"/><rect x="961.5" y="455.9" width="7.5" height="1.2" fill="#555"/><rect x="962" y="458.3" width="7" height="1.8" fill="#555"/><rect x="962" y="461" width="7" height="1.2" fill="#555"/><path d="M1378.5 457 V450.5 H1389.5 V464.5 H1383" fill="none" stroke="#5a5a5a" stroke-width="1"/><rect x="1380" y="452.5" width="8" height="1.6" fill="#555"/><rect x="1380" y="456.2" width="8" height="1.8" fill="#555"/><path d="M1383 459.5 H1388 V461.5 H1383" fill="none" stroke="#555" stroke-width="1"/><path d="M1377 460.2 V465 H1381.8Z" fill="#f0a800"/><path d="M885.5 204.5 H892 V200.8 L899.8 206.6 L892 212.4 V208.7 H885.5Z" fill="#f0a800"/></svg>
<div class="r" style="left:1710px;top:176px;width:19px;height:20px;background:#e4e4e4;"></div>
<div class="r" style="left:1711px;top:197px;width:17px;height:17px;background:#f0f0f0;"></div>
<div class="r" style="left:1711px;top:215px;width:17px;height:17px;background:#f0f0f0;"></div>
<div class="r" style="left:1711px;top:232px;width:17px;height:199px;background:#f0f0f0;"></div>
<div class="r" style="left:1714px;top:234px;width:11px;height:73px;background:#b9c3cd;"></div>
<div class="r" style="left:1711px;top:432px;width:17px;height:17px;background:#f0f0f0;"></div>
<div class="r" style="left:1711px;top:450px;width:17px;height:17px;background:#f0f0f0;"></div>
<div class="r" style="left:957px;top:469px;width:17px;height:17px;background:#f0f0f0;"></div>
<div class="r" style="left:975px;top:469px;width:15px;height:17px;background:#f0f0f0;"></div>
<div class="r" style="left:991px;top:473px;width:22px;height:10px;background:#b9c3cd;"></div>
<div class="r" style="left:1674px;top:469px;width:17px;height:17px;background:#f0f0f0;"></div>
<div class="r" style="left:1692px;top:469px;width:17px;height:17px;background:#f0f0f0;"></div>
<svg class="r" style="left:950px;top:170px" width="800" height="320" viewBox="950 170 800 320"><path d="M966.5 474.5 L963.5 478 L966.5 481.5" fill="none" stroke="#555" stroke-width="1.3"/><path d="M981.0 474.5 L984.0 478 L981.0 481.5" fill="none" stroke="#555" stroke-width="1.3"/><path d="M1684.5 474.5 L1681.5 478 L1684.5 481.5" fill="none" stroke="#555" stroke-width="1.3"/><path d="M1699.0 474.5 L1702.0 478 L1699.0 481.5" fill="none" stroke="#555" stroke-width="1.3"/><path d="M1716.0 207.0 L1719.5 204.0 L1723.0 207.0" fill="none" stroke="#555" stroke-width="1.3"/><path d="M1716.0 221.5 L1719.5 224.5 L1723.0 221.5" fill="none" stroke="#555" stroke-width="1.3"/><path d="M1716.0 441.5 L1719.5 438.5 L1723.0 441.5" fill="none" stroke="#555" stroke-width="1.3"/><path d="M1716.0 456.5 L1719.5 459.5 L1723.0 456.5" fill="none" stroke="#555" stroke-width="1.3"/><rect x="998" y="475.5" width="1.6" height="5" fill="#fff"/><rect x="1001" y="475.5" width="1.6" height="5" fill="#fff"/><rect x="1004" y="475.5" width="1.6" height="5" fill="#fff"/><rect x="1717.5" y="266" width="4" height="1.4" fill="#fff"/><rect x="1717.5" y="269" width="4" height="1.4" fill="#fff"/><rect x="1717.5" y="272" width="4" height="1.4" fill="#fff"/><rect x="1711.5" y="180.5" width="14" height="13" fill="none" stroke="#666" stroke-width="1"/><line x1="1711.5" y1="184" x2="1725.5" y2="184" stroke="#666" stroke-width="1"/><line x1="1711.5" y1="180.5" x2="1711.5" y2="193.5" stroke="#666" stroke-width="1"/><line x1="1716.2" y1="180.5" x2="1716.2" y2="193.5" stroke="#666" stroke-width="1"/><line x1="1720.9" y1="180.5" x2="1720.9" y2="193.5" stroke="#666" stroke-width="1"/><rect x="1717.3" y="186" width="1.8" height="7" fill="#666"/><rect x="1722" y="186" width="1.8" height="7" fill="#666"/></svg>
<svg class="r" style="left:1728px;top:525px" width="26" height="160" viewBox="1728 525 26 160"><rect x="1732.5" y="531.5" width="14" height="14" fill="#fff" stroke="#505050" stroke-width="1"/><line x1="1732.5" y1="534.5" x2="1746.5" y2="534.5" stroke="#505050" stroke-width="1"/><path d="M1736 536.5 L1742 542.5 M1742 536.5 L1736 542.5" stroke="#6a7088" stroke-width="2.9"/><path d="M1736 536.5 L1742 542.5 M1742 536.5 L1736 542.5" stroke="#fff" stroke-width="1.1"/><rect x="1732.5" y="553.5" width="6" height="5" fill="#fff" stroke="#505050" stroke-width="1"/><rect x="1733.5" y="555.5" width="4" height="2" fill="#1a8fe0"/><rect x="1739.5" y="561.5" width="6" height="5" fill="#fff" stroke="#505050" stroke-width="1"/><rect x="1740.5" y="563.5" width="4" height="2" fill="#1a8fe0"/><path d="M1740.5 553.5 Q1744.5 553.8 1744.5 557.5" fill="none" stroke="#505050" stroke-width="0.9"/><path d="M1737.5 566.5 Q1733.2 566 1733.3 561.5" fill="none" stroke="#505050" stroke-width="0.9"/><path d="M1743 557 L1746 557 L1744.5 559.2 Z" fill="#505050"/><path d="M1731.8 562 L1734.8 562 L1733.3 559.8 Z" fill="#505050"/><rect x="1732.5" y="575.5" width="14" height="14" fill="#fff" stroke="#505050" stroke-width="1"/><line x1="1732.5" y1="578.5" x2="1746.5" y2="578.5" stroke="#505050" stroke-width="1"/><path d="M1736 581.5 L1743 587.5 M1743 581.5 L1736 587.5" stroke="#1a8fe0" stroke-width="1.4"/><path d="M1735 580.5 h2.5 v2 h-2.5Z M1741.5 580.5 h2.5 v2 h-2.5Z M1735 586.5 h2.5 v2 h-2.5Z M1741.5 586.5 h2.5 v2 h-2.5Z" fill="#1a8fe0"/><rect x="1732.5" y="597.5" width="14" height="14" fill="#fff" stroke="#505050" stroke-width="1"/><line x1="1732.5" y1="600.5" x2="1746.5" y2="600.5" stroke="#505050" stroke-width="1"/><path d="M1739 602 V609" stroke="#1a8fe0" stroke-width="1"/><path d="M1739 600.8 l-2.5 2.5 h5Z M1739 610.2 l-2.5 -2.5 h5Z" fill="#1a8fe0"/><rect x="1732.5" y="619.5" width="14" height="14" fill="#fff" stroke="#505050" stroke-width="1"/><line x1="1732.5" y1="622.5" x2="1746.5" y2="622.5" stroke="#505050" stroke-width="1"/><path d="M1735 627.5 H1743" stroke="#8cc8f0" stroke-width="0.9"/><path d="M1733.8 627.5 l2.5 -2.5 v5Z M1744.2 627.5 l-2.5 -2.5 v5Z" fill="#1a8fe0"/><path d="M1734.5 644 Q1739 638.5 1743.5 644" fill="none" stroke="#505050" stroke-width="1"/><path d="M1734 645 l-0.8 -2.8 l2.8 1.2Z M1744 645 l0.8 -2.8 l-2.8 1.2Z" fill="#505050"/><rect x="1732" y="647.5" width="4" height="4" fill="#1a8a3a" stroke="#555" stroke-width="0.7"/><rect x="1742" y="647.5" width="4" height="4" fill="#f0a800" stroke="#555" stroke-width="0.7"/><path d="M1732.5 661 H1740 L1743 664.5 H1732.5 Z" fill="#5e5e5e"/><rect x="1736" y="664.5" width="2.5" height="7.5" fill="#5e5e5e"/><rect x="1731.5" y="671.5" width="8.5" height="1.5" fill="#5e5e5e"/><rect x="1736.2" y="674" width="2" height="2" fill="#5e5e5e"/><path d="M1745.5 670.8 A2.6 2.6 0 1 0 1745.5 673.6" fill="none" stroke="#5e5e5e" stroke-width="1.7"/></svg>
<div class="r" style="left:894px;top:531px;width:481.3px;height:19px;background:#fff;border:1px solid #bdbdbd;border-bottom:2px solid #c4c4c4;box-sizing:border-box;"></div>
<div class="r" style="left:894px;top:530px;width:94.60000000000002px;height:20px;background:#0a9ade;"></div>
<div class="t" style="left:910.50px;top:533.54px;font-size:12.00px;line-height:14px;color:#ffffff;font-family:'Liberation Sans', sans-serif;">Variablen 1</div>
<div class="r" style="left:1077px;top:531px;width:1px;height:17px;background:#c8c8c8;"></div>
<div class="t" style="left:1008.10px;top:533.54px;font-size:12.00px;line-height:14px;color:#222222;font-family:'Liberation Sans', sans-serif;">Variablen 2</div>
<div class="r" style="left:1138px;top:531px;width:1px;height:17px;background:#c8c8c8;"></div>
<div class="t" style="left:1096.80px;top:533.54px;font-size:12.00px;line-height:14px;color:#222222;font-family:'Liberation Sans', sans-serif;">Locals</div>
<div class="r" style="left:1204px;top:531px;width:1px;height:17px;background:#c8c8c8;"></div>
<div class="t" style="left:1157.50px;top:533.54px;font-size:12.00px;line-height:14px;color:#222222;font-family:'Liberation Sans', sans-serif;">Globals</div>
<div class="r" style="left:1260px;top:531px;width:1px;height:17px;background:#c8c8c8;"></div>
<div class="t" style="left:1224.00px;top:533.54px;font-size:12.00px;line-height:14px;color:#222222;font-family:'Liberation Sans', sans-serif;">Auto</div>
<div class="t" style="left:1279.80px;top:533.54px;font-size:12.00px;line-height:14px;color:#222222;font-family:'Liberation Sans', sans-serif;">Speicheranalyse</div>
<div class="r" style="left:883px;top:555px;width:845.5px;height:2px;background:#2b5d8b;"></div>
<svg class="r" style="left:930px;top:545px" width="24" height="14" viewBox="930 545 24 14"><path d="M935.5 557 L941.5 551 L947.5 557" fill="#fff" stroke="#2b5d8b" stroke-width="1.8"/></svg>
<svg class="r" style="left:880px;top:570px" width="440" height="25" viewBox="880 570 440 25"><rect x="893" y="576.5" width="13" height="1.4" fill="#666"/><rect x="897" y="575" width="5" height="1.5" fill="#666"/><path d="M894.5 578.5 L895.5 589.5 H903.5 L904.5 578.5" fill="none" stroke="#666" stroke-width="1.2"/><path d="M897.3 580 V588 M899.5 580 V588 M901.7 580 V588" stroke="#777" stroke-width="0.9"/><path d="M913.5 590 V575.5 H923.5 V581" fill="none" stroke="#666" stroke-width="1"/><path d="M913.5 590 H919" stroke="#666" stroke-width="1"/><rect x="915.5" y="577.5" width="7" height="2" fill="#1a8a2a"/><rect x="915.5" y="581.0" width="7" height="2" fill="#1a8a2a"/><rect x="915.5" y="584.5" width="7" height="2" fill="#1a8a2a"/><path d="M922 583 L927 590 L924.5 588 L923 590.5Z" fill="#666"/><path d="M934.5 590 V575.5 H944.5 V581" fill="none" stroke="#666" stroke-width="1"/><path d="M934.5 590 H940" stroke="#666" stroke-width="1"/><rect x="936.5" y="577.5" width="7" height="2" fill="none" stroke="#777" stroke-width="0.8"/><rect x="936.5" y="581.0" width="7" height="2" fill="none" stroke="#777" stroke-width="0.8"/><rect x="936.5" y="584.5" width="7" height="2" fill="none" stroke="#777" stroke-width="0.8"/><path d="M943 583 L948 590 L945.5 588 L944 590.5Z" fill="#666"/><path d="M955.5 590 V575.5 H966 V581 M955.5 582.5 H962 M955.5 590 H962" fill="none" stroke="#666" stroke-width="1"/><rect x="956.5" y="577" width="9" height="1.8" fill="#d01818"/><circle cx="965.5" cy="586.5" r="3.4" fill="#d01818"/><rect x="963.3" y="585.8" width="4.4" height="1.4" fill="#fff"/><path d="M986 575 V579 M992.5 575 V579" stroke="#555" stroke-width="1.4"/><path d="M984 578.5 h4 l-2 2.5z M990.5 578.5 h4 l-2 2.5z" fill="#555"/><rect x="983.5" y="583" width="5.5" height="5.5" fill="#f0a800" stroke="#555" stroke-width="0.8"/><rect x="991.5" y="583" width="5.5" height="5.5" fill="#d01818" stroke="#555" stroke-width="0.8"/><rect x="1012" y="578" width="5.5" height="7" fill="#f0a800"/><path d="M1019.5 582 H1025 M1019.5 580 L1023 576 M1019.5 584 L1023 588" stroke="#666" stroke-width="0.9"/><path d="M1025.5 582 l-2 -1.5 v3z" fill="#666"/><path d="M1039.5 576 h7 l-3.5 4z" fill="#1a9a4a"/><rect x="1042.5" y="579.5" width="10.5" height="9.5" fill="none" stroke="#777" stroke-width="1"/><rect x="1044.5" y="581.5" width="7" height="6" fill="#666"/><rect x="981" y="591" width="21" height="1" fill="#c8c8c8"/><rect x="1009" y="591" width="21" height="1" fill="#c8c8c8"/><rect x="1037" y="591" width="21" height="1" fill="#c8c8c8"/><path d="M1291 575 H1304.5 L1306 576.5 V590 H1291Z" fill="#666"/><rect x="1293.5" y="576" width="9.5" height="5" fill="#f4f4f4"/><rect x="1294" y="585" width="8.5" height="5" fill="#f4f4f4"/><rect x="1298.5" y="586" width="2.5" height="3" fill="#666"/></svg>
<div class="r" style="left:888px;top:592px;width:836px;height:253px;background:#f9f9f9;border:1px solid #dcdcdc;box-sizing:border-box;"></div>
<div class="r" style="left:890px;top:595px;width:831.5px;height:20.5px;background:#e4e4e4;"></div>
<div class="r" style="left:890px;top:595px;width:17.5px;height:20.5px;background:#dedede;"></div>
<div class="t" style="left:911.20px;top:597.97px;font-size:12.50px;line-height:15px;color:#111;font-family:'Liberation Sans', sans-serif;transform:scaleX(0.9400);transform-origin:0 0;">S...</div>
<div class="t" style="left:937.20px;top:597.97px;font-size:12.50px;line-height:15px;color:#111;font-family:'Liberation Sans', sans-serif;transform:scaleX(0.9400);transform-origin:0 0;">Variable</div>
<div class="t" style="left:1082.00px;top:597.97px;font-size:12.50px;line-height:15px;color:#111;font-family:'Liberation Sans', sans-serif;transform:scaleX(0.9400);transform-origin:0 0;">W..</div>
<div class="t" style="left:1108.40px;top:597.97px;font-size:12.50px;line-height:15px;color:#111;font-family:'Liberation Sans', sans-serif;transform:scaleX(0.9400);transform-origin:0 0;">Wert</div>
<div class="t" style="left:1288.50px;top:597.97px;font-size:12.50px;line-height:15px;color:#111;font-family:'Liberation Sans', sans-serif;transform:scaleX(0.9400);transform-origin:0 0;">Ä...</div>
<div class="t" style="left:1314.20px;top:597.97px;font-size:12.50px;line-height:15px;color:#111;font-family:'Liberation Sans', sans-serif;transform:scaleX(0.9400);transform-origin:0 0;">Hexadezimaler Wert</div>
<div class="t" style="left:1495.00px;top:597.97px;font-size:12.50px;line-height:15px;color:#111;font-family:'Liberation Sans', sans-serif;transform:scaleX(0.9400);transform-origin:0 0;">Technischer Typ</div>
<div class="t" style="left:1604.50px;top:597.97px;font-size:12.50px;line-height:15px;color:#111;font-family:'Liberation Sans', sans-serif;transform:scaleX(0.9400);transform-origin:0 0;">Absoluter Typ</div>
<div class="r" style="left:907px;top:595px;width:1px;height:20.5px;background:#cccccc;"></div>
<div class="r" style="left:934px;top:595px;width:1px;height:20.5px;background:#cccccc;"></div>
<div class="r" style="left:1079px;top:595px;width:1px;height:20.5px;background:#cccccc;"></div>
<div class="r" style="left:1105px;top:595px;width:1px;height:20.5px;background:#cccccc;"></div>
<div class="r" style="left:1285px;top:595px;width:1px;height:20.5px;background:#cccccc;"></div>
<div class="r" style="left:1311px;top:595px;width:1px;height:20.5px;background:#cccccc;"></div>
<div class="r" style="left:1491px;top:595px;width:1px;height:20.5px;background:#cccccc;"></div>
<div class="r" style="left:1601px;top:595px;width:1px;height:20.5px;background:#cccccc;"></div>
<div class="r" style="left:890px;top:615.5px;width:17px;height:208.5px;background:#e3e3e3;"></div>
<div class="r" style="left:907px;top:615.5px;width:27px;height:208.5px;background:#e8ebee;"></div>
<div class="r" style="left:934px;top:615.5px;width:145px;height:208.5px;background:#ffffff;"></div>
<div class="r" style="left:1079px;top:615.5px;width:26px;height:208.5px;background:#e8ebee;"></div>
<div class="r" style="left:1105px;top:615.5px;width:180px;height:208.5px;background:#e8ebee;"></div>
<div class="r" style="left:1285px;top:615.5px;width:26px;height:208.5px;background:#f6f6f6;"></div>
<div class="r" style="left:1311px;top:615.5px;width:391px;height:208.5px;background:#e8ebee;"></div>
<div class="r" style="left:890px;top:615.5px;width:812px;height:1px;background:#c9c9c9;"></div>
<div class="r" style="left:890px;top:636.4px;width:812px;height:1px;background:#c9c9c9;"></div>
<div class="r" style="left:890px;top:657.3px;width:812px;height:1px;background:#c9c9c9;"></div>
<div class="r" style="left:890px;top:678.2px;width:812px;height:1px;background:#c9c9c9;"></div>
<div class="r" style="left:890px;top:699.1px;width:812px;height:1px;background:#c9c9c9;"></div>
<div class="r" style="left:890px;top:720.0px;width:812px;height:1px;background:#c9c9c9;"></div>
<div class="r" style="left:890px;top:740.9px;width:812px;height:1px;background:#c9c9c9;"></div>
<div class="r" style="left:890px;top:761.8px;width:812px;height:1px;background:#c9c9c9;"></div>
<div class="r" style="left:890px;top:782.7px;width:812px;height:1px;background:#c9c9c9;"></div>
<div class="r" style="left:890px;top:803.6px;width:812px;height:1px;background:#c9c9c9;"></div>
<div class="r" style="left:907px;top:615.5px;width:1px;height:208.5px;background:#c9c9c9;"></div>
<div class="r" style="left:934px;top:615.5px;width:1px;height:208.5px;background:#c9c9c9;"></div>
<div class="r" style="left:1079px;top:615.5px;width:1px;height:208.5px;background:#c9c9c9;"></div>
<div class="r" style="left:1105px;top:615.5px;width:1px;height:208.5px;background:#c9c9c9;"></div>
<div class="r" style="left:1285px;top:615.5px;width:1px;height:208.5px;background:#c9c9c9;"></div>
<div class="r" style="left:1311px;top:615.5px;width:1px;height:208.5px;background:#c9c9c9;"></div>
<div class="r" style="left:1491px;top:615.5px;width:1px;height:208.5px;background:#c9c9c9;"></div>
<div class="r" style="left:1601px;top:615.5px;width:1px;height:208.5px;background:#c9c9c9;"></div>
<div class="r" style="left:1702px;top:615.5px;width:1px;height:208.5px;background:#c9c9c9;"></div>
<div class="t" style="left:935.60px;top:619.81px;font-size:11.60px;line-height:14px;color:#3a3a3a;font-family:'Liberation Mono', monospace;">IR_PROTOCOL</div>
<div class="r" style="left:1106px;top:618px;width:179.5px;height:16px;border:1px dashed #222;box-sizing:border-box;"></div>
<div class="r" style="left:1106.5px;top:619px;width:1.5px;height:14px;background:#111;"></div>
<div class="r" style="left:1108px;top:618px;width:177px;height:16px;overflow:hidden;">
<div class="t" style="left:0.50px;top:1.41px;font-size:11.60px;line-height:14px;color:#3a3a3a;font-family:'Liberation Mono', monospace;">{O:5579*\CLASS=/GIB/CL_DCP</div>
</div>
<div class="t" style="left:1492.30px;top:619.07px;font-size:12.50px;line-height:15px;color:#050505;font-family:'Liberation Sans', sans-serif;letter-spacing:0.088px;transform:scaleX(0.9400);transform-origin:0 0;">Ref to /GIB/CL_DC..</div>
<div class="t" style="left:1602.70px;top:619.07px;font-size:12.50px;line-height:15px;color:#050505;font-family:'Liberation Sans', sans-serif;letter-spacing:0.537px;transform:scaleX(0.9400);transform-origin:0 0;">\TYPE=%_T0000</div>
<div class="r" style="left:1702px;top:595px;width:19.5px;height:20.5px;background:#e4e4e4;"></div>
<div class="r" style="left:1703px;top:616px;width:18px;height:171px;background:#f0f0f0;"></div>
<div class="r" style="left:1703px;top:788px;width:18px;height:17px;background:#f0f0f0;"></div>
<div class="r" style="left:1703px;top:806px;width:18px;height:17px;background:#f0f0f0;"></div>
<div class="r" style="left:934px;top:825px;width:17px;height:17px;background:#f0f0f0;"></div>
<div class="r" style="left:952px;top:825px;width:17px;height:17px;background:#f0f0f0;"></div>
<div class="r" style="left:972.5px;top:829px;width:621px;height:10px;background:#b9c3cd;"></div>
<div class="r" style="left:1667px;top:825px;width:17px;height:17px;background:#f0f0f0;"></div>
<div class="r" style="left:1685px;top:825px;width:17px;height:17px;background:#f0f0f0;"></div>
<svg class="r" style="left:930px;top:590px" width="800" height="260" viewBox="930 590 800 260"><path d="M945.5 830.5 L942.5 834 L945.5 837.5" fill="none" stroke="#555" stroke-width="1.3"/><path d="M960.0 830.5 L963.0 834 L960.0 837.5" fill="none" stroke="#555" stroke-width="1.3"/><path d="M1677.5 830.5 L1674.5 834 L1677.5 837.5" fill="none" stroke="#555" stroke-width="1.3"/><path d="M1692.0 830.5 L1695.0 834 L1692.0 837.5" fill="none" stroke="#555" stroke-width="1.3"/><path d="M1708.5 626.5 L1712 623.5 L1715.5 626.5" fill="none" stroke="#555" stroke-width="1.3"/><path d="M1708.5 641.5 L1712 644.5 L1715.5 641.5" fill="none" stroke="#555" stroke-width="1.3"/><path d="M1708.5 798.0 L1712 795.0 L1715.5 798.0" fill="none" stroke="#555" stroke-width="1.3"/><path d="M1708.5 813.0 L1712 816.0 L1715.5 813.0" fill="none" stroke="#555" stroke-width="1.3"/><rect x="1279.5" y="831.5" width="1.6" height="5" fill="#fff"/><rect x="1282.5" y="831.5" width="1.6" height="5" fill="#fff"/><rect x="1285.5" y="831.5" width="1.6" height="5" fill="#fff"/><rect x="1704.5" y="599.5" width="14" height="13" fill="none" stroke="#666" stroke-width="1"/><line x1="1704.5" y1="603" x2="1718.5" y2="603" stroke="#666" stroke-width="1"/><line x1="1704.5" y1="599.5" x2="1704.5" y2="612.5" stroke="#666" stroke-width="1"/><line x1="1709.2" y1="599.5" x2="1709.2" y2="612.5" stroke="#666" stroke-width="1"/><line x1="1713.9" y1="599.5" x2="1713.9" y2="612.5" stroke="#666" stroke-width="1"/><rect x="1710.3" y="605" width="1.8" height="7" fill="#666"/><rect x="1715" y="605" width="1.8" height="7" fill="#666"/></svg>
</body></html>
